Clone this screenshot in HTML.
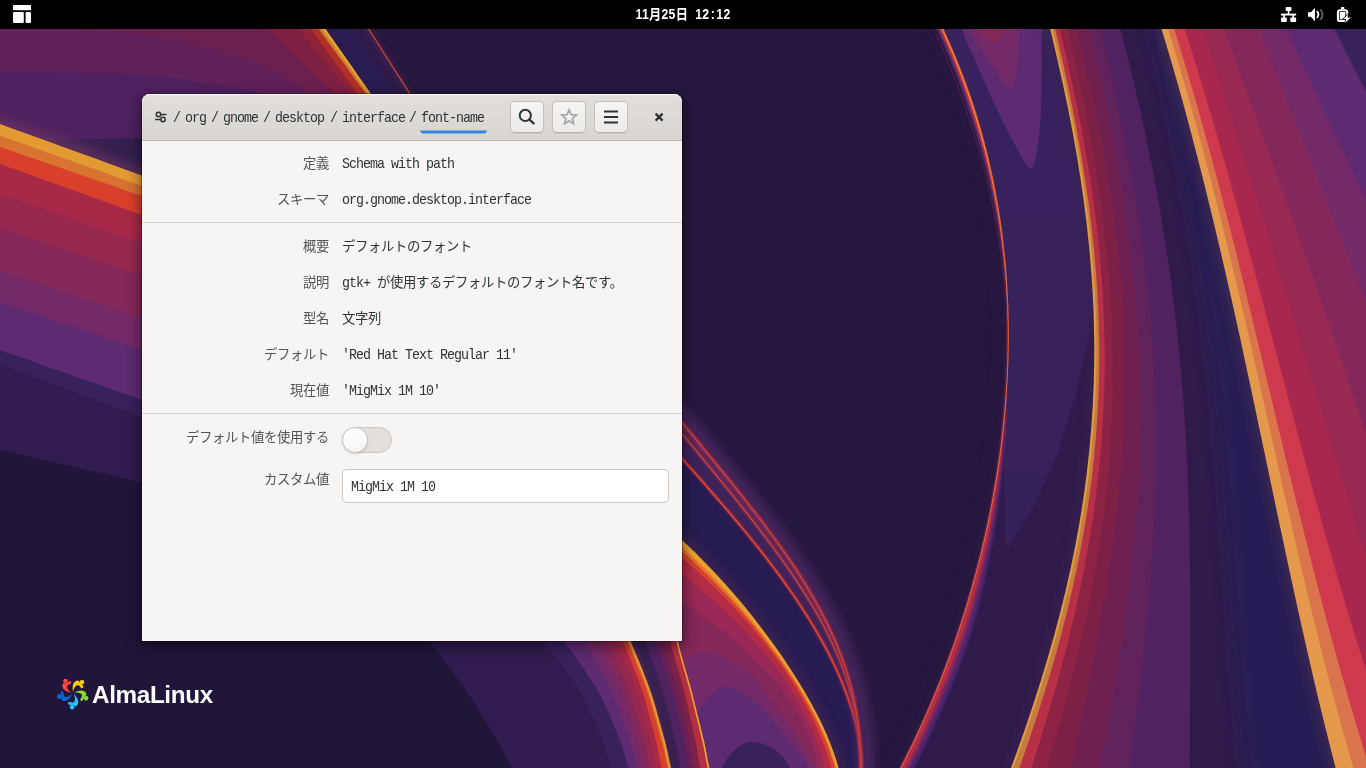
<!DOCTYPE html>
<html lang="ja">
<head>
<meta charset="utf-8">
<title>dconf-editor</title>
<style>
html,body{margin:0;padding:0;}
body{width:1366px;height:768px;overflow:hidden;position:relative;background:#26183f;font-family:"Liberation Mono","Noto Sans CJK JP",monospace;}
#wall{position:absolute;left:0;top:0;width:1366px;height:768px;}
#topbar{position:absolute;left:0;top:0;width:1366px;height:29px;background:#000;}
#clock{position:absolute;left:583px;top:0;width:200px;height:29px;line-height:29px;text-align:center;color:#fff;font-weight:bold;font-size:14px;white-space:nowrap;font-family:"Liberation Sans","Noto Sans CJK JP",sans-serif;transform:scaleX(0.87);word-spacing:3.9px;letter-spacing:0.35px;}
#clock i{font-style:normal;padding:0 1.5px;}
#win{position:absolute;left:142px;top:94px;width:540px;height:547px;background:#f6f5f4;border-radius:8px 8px 0 0;box-shadow:0 0 0 1px rgba(0,0,0,.25),0 4px 14px 2px rgba(0,0,0,.45);}
#hdr{position:absolute;left:0;top:0;width:540px;height:46px;border-radius:8px 8px 0 0;background:linear-gradient(#e1dedb,#dad6d2);border-bottom:1px solid #bfb8b1;box-shadow:inset 0 1px rgba(255,255,255,.8);}
.t{will-change:transform;position:absolute;white-space:nowrap;font-size:13.33px;line-height:20px;color:#2e3436;letter-spacing:-0.33px;}
.l{letter-spacing:-1px;transform:scaleY(1.08);transform-origin:0 72%;}
span.l{display:inline-block;}
.lab{color:#525557;text-align:right;width:200px;left:-12.7px;}
.val{left:200px;}
.sep{position:absolute;left:0;width:540px;height:1px;background:#d8d4d0;}
.btn{position:absolute;top:6.5px;width:32px;height:30px;border:1px solid #c6c0ba;border-bottom-color:#b8b1aa;border-radius:5px;background:linear-gradient(#f6f5f4,#edebe9);box-shadow:0 1px 1px rgba(0,0,0,.08);}
.pb{top:14.5px;margin-left:-0.6px;}
#sw{position:absolute;left:200px;top:333px;width:48px;height:24px;border:1px solid #cdc7c2;border-radius:14px;background:#e1dedb;}
#knob{position:absolute;left:-1px;top:-1px;width:24px;height:24px;border:1px solid #cdc7c2;border-radius:50%;background:linear-gradient(#fff,#f6f5f4);box-shadow:0 1px 2px rgba(0,0,0,.15);}
#entry{position:absolute;left:200px;top:375px;width:325px;height:31.5px;border:1px solid #cdc7c2;border-radius:5px;background:#fff;}
#almatxt{position:absolute;left:92px;top:681px;font-family:"Liberation Sans",sans-serif;font-weight:bold;font-size:24.3px;line-height:28px;color:#fff;letter-spacing:-0.38px;white-space:nowrap;transform:translateZ(0);}
</style>
</head>
<body>
<div id="wall"><svg width="1366" height="768" viewBox="0 0 1366 768" style="position:absolute;left:0;top:0"><defs>
<linearGradient id="gC" gradientUnits="userSpaceOnUse" x1="0" y1="0" x2="0" y2="768"><stop offset="0" stop-color="#3a235e"/><stop offset="0.45" stop-color="#38225c"/><stop offset="0.72" stop-color="#36215a"/><stop offset="1" stop-color="#36215a"/></linearGradient>
<linearGradient id="gWedge" gradientUnits="userSpaceOnUse" x1="30" y1="0" x2="150" y2="0"><stop offset="0" stop-color="#47245a"/><stop offset="1" stop-color="#2f1e4d"/></linearGradient>
<linearGradient id="gNavT" gradientUnits="userSpaceOnUse" x1="324.8" y1="28" x2="354.4" y2="7.3"><stop offset="0" stop-color="#2a1c52"/><stop offset="0.5" stop-color="#2a1c50"/><stop offset="0.68" stop-color="#2e1a48"/><stop offset="0.82" stop-color="#321c4a"/><stop offset="0.93" stop-color="#48235a"/><stop offset="1" stop-color="#5a2860"/></linearGradient>
<filter id="b1" x="-30%" y="-30%" width="160%" height="160%"><feGaussianBlur stdDeviation="0.9"/></filter>
<filter id="b2" x="-30%" y="-30%" width="160%" height="160%"><feGaussianBlur stdDeviation="2"/></filter>
<filter id="b4" x="-30%" y="-30%" width="160%" height="160%"><feGaussianBlur stdDeviation="4"/></filter>
<filter id="b8" x="-30%" y="-30%" width="160%" height="160%"><feGaussianBlur stdDeviation="8"/></filter>
</defs><rect width="1366" height="768" fill="#26183f"/>
<path d="M-40 -10 L470 -10 L470 420 L-40 420 Z" fill="#602059" />
<path d="M40.0 20.0C46.2 21.3 56.3 25.1 77.0 28.0C97.7 30.9 137.8 32.7 164.0 37.4C190.2 42.1 214.5 49.8 234.0 56.0C253.5 62.2 269.0 68.7 281.0 74.8C293.0 80.9 297.8 84.0 306.0 92.4C314.2 100.8 326.0 119.6 330.0 125.0L330.0 -10.0L40.0 -10.0Z" fill="#6c2050" />
<path d="M-40.0 70.0C-33.3 70.2 -30.1 70.5 0.0 71.3C30.1 72.1 105.4 72.7 140.5 74.8C175.6 76.9 191.3 81.1 210.8 84.0C230.3 86.9 242.7 88.1 257.6 92.4C272.5 96.7 285.4 100.4 300.0 110.0C314.6 119.6 337.5 143.3 345.0 150.0L345.0 420.0L-40.0 420.0Z" fill="#4f2160" />
<path d="M36.0 140.5C45.0 140.2 72.3 139.4 90.0 139.0C107.7 138.6 107.0 138.8 142.0 138.0C177.0 137.2 273.7 134.7 300.0 134.0L300.0 300.0L36.0 141.0Z" fill="url(#gWedge)" />
<path d="M238.4 0.0C243.2 4.7 256.8 18.0 267.0 28.0C277.2 38.0 288.4 49.0 299.6 60.0C310.8 71.0 322.7 82.7 334.3 94.0C345.9 105.3 363.2 122.3 369.0 128.0L394.9 128.0C391.0 122.3 379.1 105.3 371.2 94.0C363.3 82.7 355.1 71.0 347.5 60.0C339.8 49.0 332.1 38.0 325.1 28.0C318.1 18.0 308.8 4.7 305.5 0.0Z" fill="#7e2044" />
<path d="M273.6 0.0C277.5 4.7 288.5 18.0 296.8 28.0C305.1 38.0 314.2 49.0 323.3 60.0C332.4 71.0 342.0 82.7 351.4 94.0C360.8 105.3 374.8 122.3 379.5 128.0L394.9 128.0C391.0 122.3 379.1 105.3 371.2 94.0C363.3 82.7 355.1 71.0 347.5 60.0C339.8 49.0 332.1 38.0 325.1 28.0C318.1 18.0 308.8 4.7 305.5 0.0Z" fill="#902238" />
<path d="M289.6 0.0C293.0 4.7 302.7 18.0 310.0 28.0C317.3 38.0 325.3 49.0 333.3 60.0C341.3 71.0 349.8 82.7 358.0 94.0C366.2 105.3 378.6 122.3 382.7 128.0L394.9 128.0C391.0 122.3 379.1 105.3 371.2 94.0C363.3 82.7 355.1 71.0 347.5 60.0C339.8 49.0 332.1 38.0 325.1 28.0C318.1 18.0 308.8 4.7 305.5 0.0Z" fill="#b03028" />
<path d="M297.5 0.0C300.9 4.7 310.6 18.0 317.9 28.0C325.2 38.0 333.2 49.0 341.2 60.0C349.2 71.0 357.7 82.7 366.0 94.0C374.3 105.3 386.6 122.3 390.8 128.0L394.9 128.0C391.0 122.3 379.1 105.3 371.2 94.0C363.3 82.7 355.1 71.0 347.5 60.0C339.8 49.0 332.1 38.0 325.1 28.0C318.1 18.0 308.8 4.7 305.5 0.0Z" fill="#cc7c2c" />
<path d="M301.3 0.0C304.6 4.7 314.2 18.0 321.3 28.0C328.4 38.0 336.3 49.0 344.1 60.0C352.0 71.0 360.3 82.7 368.4 94.0C376.5 105.3 388.6 122.3 392.7 128.0L394.9 128.0C391.0 122.3 379.1 105.3 371.2 94.0C363.3 82.7 355.1 71.0 347.5 60.0C339.8 49.0 332.1 38.0 325.1 28.0C318.1 18.0 308.8 4.7 305.5 0.0Z" fill="#e2a030" />
<path d="M305.5 0.0C308.8 4.7 318.1 18.0 325.1 28.0C332.1 38.0 339.8 49.0 347.5 60.0C355.1 71.0 363.3 82.7 371.2 94.0C379.1 105.3 391.0 122.3 394.9 128.0L431.6 128.0C428.0 122.3 417.2 105.3 410.0 94.0C402.8 82.7 395.4 71.0 388.4 60.0C381.4 49.0 374.4 38.0 368.0 28.0C361.6 18.0 353.2 4.7 350.2 0.0Z" fill="url(#gNavT)" />
<path d="M350.2 0.0C353.2 4.7 361.6 18.0 368.0 28.0C374.4 38.0 381.4 49.0 388.4 60.0C395.4 71.0 402.8 82.7 410.0 94.0C417.2 105.3 428.0 122.3 431.6 128.0L470.0 128.0C470.0 122.3 470.0 105.3 470.0 94.0C470.0 82.7 470.0 71.0 470.0 60.0C470.0 49.0 470.0 38.0 470.0 28.0C470.0 18.0 470.0 4.7 470.0 0.0Z" fill="#26183f" />
<path d="M350.2 0.0C353.2 4.7 361.6 18.0 368.0 28.0C374.4 38.0 381.4 49.0 388.4 60.0C395.4 71.0 402.8 82.7 410.0 94.0C417.2 105.3 428.0 122.3 431.6 128.0" fill="none" stroke="#3a1c48" stroke-width="8" filter="url(#b2)" opacity="0.7"/>
<path d="M350.2 0.0C353.2 4.7 361.6 18.0 368.0 28.0C374.4 38.0 381.4 49.0 388.4 60.0C395.4 71.0 402.8 82.7 410.0 94.0C417.2 105.3 428.0 122.3 431.6 128.0" fill="none" stroke="#c8482c" stroke-width="1.3" />
<path d="M599.8 476.0C605.0 479.6 621.0 490.4 630.8 497.6C640.5 504.8 649.6 512.0 658.3 519.2C666.9 526.4 675.0 533.6 682.8 540.8C690.6 548.0 698.0 555.2 705.0 562.4C712.1 569.6 718.8 576.8 725.2 584.0C731.7 591.2 737.8 598.4 743.8 605.6C749.7 612.8 755.4 620.0 760.9 627.2C766.4 634.4 771.7 641.6 776.8 648.8C781.9 656.0 786.8 663.2 791.4 670.4C796.1 677.6 800.6 684.8 804.8 692.0C809.0 699.2 813.0 706.4 816.7 713.6C820.4 720.8 823.9 728.0 827.0 735.2C830.0 742.4 832.9 749.6 835.2 756.8C837.5 764.0 839.6 771.2 841.0 778.4C842.5 785.6 843.4 796.4 843.9 800.0L859.8 800.0C860.1 796.2 861.7 784.7 861.9 777.1C862.1 769.4 861.7 761.8 861.0 754.1C860.2 746.5 859.0 738.8 857.4 731.2C855.8 723.5 853.8 715.9 851.4 708.2C849.1 700.6 846.3 692.9 843.2 685.3C840.2 677.6 836.8 670.0 833.1 662.4C829.4 654.7 825.4 647.1 821.1 639.4C816.8 631.8 812.2 624.1 807.4 616.5C802.6 608.8 797.6 601.2 792.3 593.5C787.0 585.9 781.5 578.2 775.8 570.6C770.1 562.9 764.2 555.3 758.2 547.6C752.1 540.0 745.9 532.4 739.5 524.7C733.2 517.1 726.7 509.4 720.1 501.8C713.5 494.1 706.8 486.5 700.1 478.8C693.4 471.2 686.6 463.5 679.8 455.9C673.1 448.2 666.3 440.6 659.6 432.9C652.9 425.3 643.0 413.8 639.7 410.0Z" fill="#271c52" />
<path d="M599.8 476.0C605.0 479.6 621.0 490.4 630.8 497.6C640.5 504.8 649.6 512.0 658.3 519.2C666.9 526.4 675.0 533.6 682.8 540.8C690.6 548.0 698.0 555.2 705.0 562.4C712.1 569.6 718.8 576.8 725.2 584.0C731.7 591.2 737.8 598.4 743.8 605.6C749.7 612.8 755.4 620.0 760.9 627.2C766.4 634.4 771.7 641.6 776.8 648.8C781.9 656.0 786.8 663.2 791.4 670.4C796.1 677.6 800.6 684.8 804.8 692.0C809.0 699.2 813.0 706.4 816.7 713.6C820.4 720.8 823.9 728.0 827.0 735.2C830.0 742.4 832.9 749.6 835.2 756.8C837.5 764.0 839.6 771.2 841.0 778.4C842.5 785.6 843.4 796.4 843.9 800.0" fill="none" stroke="#3a2250" stroke-width="14" filter="url(#b4)" opacity="0.9"/>
<path d="M599.8 476.0C605.0 479.6 621.0 490.4 630.8 497.6C640.5 504.8 649.6 512.0 658.3 519.2C666.9 526.4 675.0 533.6 682.8 540.8C690.6 548.0 698.0 555.2 705.0 562.4C712.1 569.6 718.8 576.8 725.2 584.0C731.7 591.2 737.8 598.4 743.8 605.6C749.7 612.8 755.4 620.0 760.9 627.2C766.4 634.4 771.7 641.6 776.8 648.8C781.9 656.0 786.8 663.2 791.4 670.4C796.1 677.6 800.6 684.8 804.8 692.0C809.0 699.2 813.0 706.4 816.7 713.6C820.4 720.8 823.9 728.0 827.0 735.2C830.0 742.4 832.9 749.6 835.2 756.8C837.5 764.0 839.6 771.2 841.0 778.4C842.5 785.6 843.4 796.4 843.9 800.0L560.0 800.0L560.0 480.0Z" fill="#e8a030" />
<path d="M599.8 484.0C605.0 487.5 620.8 498.0 630.5 505.1C640.1 512.1 649.1 519.1 657.7 526.1C666.4 533.2 674.4 540.2 682.2 547.2C690.0 554.2 697.3 561.2 704.4 568.3C711.4 575.3 718.1 582.3 724.6 589.3C731.0 596.4 737.2 603.4 743.1 610.4C749.1 617.4 754.8 624.4 760.3 631.5C765.8 638.5 771.0 645.5 776.1 652.5C781.1 659.6 786.0 666.6 790.6 673.6C795.2 680.6 799.6 687.6 803.8 694.7C807.9 701.7 811.8 708.7 815.4 715.7C819.0 722.8 822.4 729.8 825.3 736.8C828.3 743.8 831.0 750.8 833.2 757.9C835.4 764.9 837.2 771.9 838.5 778.9C839.8 786.0 840.5 796.5 840.9 800.0L560.0 800.0L560.0 480.0Z" fill="#e0762f" />
<path d="M599.9 489.0C605.0 492.5 620.7 502.8 630.3 509.7C639.9 516.6 648.9 523.6 657.5 530.5C666.1 537.4 674.2 544.3 682.0 551.2C689.8 558.1 697.2 565.0 704.3 571.9C711.4 578.8 718.1 585.8 724.6 592.7C731.1 599.6 737.3 606.5 743.2 613.4C749.2 620.3 754.9 627.2 760.4 634.1C765.8 641.0 771.1 648.0 776.1 654.9C781.1 661.8 785.9 668.7 790.4 675.6C795.0 682.5 799.3 689.4 803.3 696.3C807.4 703.2 811.2 710.2 814.7 717.1C818.2 724.0 821.5 730.9 824.4 737.8C827.2 744.7 829.9 751.6 832.0 758.5C834.2 765.4 836.0 772.4 837.3 779.3C838.6 786.2 839.4 796.5 839.8 800.0L560.0 800.0L560.0 480.0Z" fill="#d8402f" />
<path d="M599.7 497.0C604.7 500.4 620.1 510.5 629.6 517.2C639.1 523.9 648.1 530.7 656.8 537.4C665.5 544.1 673.7 550.9 681.6 557.6C689.5 564.3 697.0 571.1 704.2 577.8C711.4 584.5 718.3 591.3 724.8 598.0C731.4 604.7 737.7 611.5 743.6 618.2C749.6 624.9 755.3 631.7 760.7 638.4C766.2 645.1 771.3 651.9 776.2 658.6C781.1 665.3 785.7 672.1 790.1 678.8C794.4 685.5 798.5 692.3 802.4 699.0C806.2 705.7 809.7 712.5 813.0 719.2C816.3 725.9 819.2 732.7 821.9 739.4C824.6 746.1 827.0 752.9 829.0 759.6C831.0 766.3 832.8 773.1 834.1 779.8C835.4 786.5 836.5 796.6 837.0 800.0L560.0 800.0L560.0 480.0Z" fill="#b22c46" />
<path d="M599.9 512.0C604.4 515.2 617.8 524.8 626.5 531.2C635.2 537.6 643.8 544.0 652.1 550.4C660.5 556.8 668.7 563.2 676.6 569.6C684.5 576.0 692.3 582.4 699.7 588.8C707.1 595.2 714.3 601.6 721.1 608.0C728.0 614.4 734.5 620.8 740.8 627.2C747.0 633.6 752.9 640.0 758.5 646.4C764.1 652.8 769.4 659.2 774.3 665.6C779.2 672.0 783.8 678.4 788.1 684.8C792.3 691.2 796.2 697.6 799.8 704.0C803.4 710.4 806.6 716.8 809.5 723.2C812.5 729.6 815.1 736.0 817.4 742.4C819.7 748.8 821.7 755.2 823.5 761.6C825.2 768.0 826.7 774.4 828.0 780.8C829.2 787.2 830.6 796.8 831.1 800.0L560.0 800.0L560.0 480.0Z" fill="#9a2856" />
<path d="M599.8 542.0C603.6 544.9 615.0 553.5 622.9 559.2C630.7 564.9 639.0 570.7 647.1 576.4C655.3 582.1 663.6 587.9 671.7 593.6C679.8 599.3 687.9 605.1 695.6 610.8C703.4 616.5 711.0 622.3 718.3 628.0C725.5 633.7 732.5 639.5 739.1 645.2C745.6 650.9 751.9 656.7 757.6 662.4C763.4 668.1 768.8 673.9 773.7 679.6C778.6 685.3 783.1 691.1 787.2 696.8C791.3 702.5 794.9 708.3 798.1 714.0C801.4 719.7 804.2 725.5 806.7 731.2C809.2 736.9 811.3 742.7 813.2 748.4C815.2 754.1 816.8 759.9 818.3 765.6C819.8 771.3 821.1 777.1 822.4 782.8C823.8 788.5 825.8 797.1 826.5 800.0L560.0 800.0L560.0 480.0Z" fill="#84285a" />
<path d="M660.0 690.0C664.0 685.3 676.2 668.2 684.0 662.0C691.8 655.8 696.2 650.7 707.0 652.5C717.8 654.3 736.2 662.6 748.7 673.0C761.2 683.4 773.5 703.5 782.0 715.0C790.5 726.5 794.5 733.2 800.0 742.0C805.5 750.8 810.7 758.3 815.0 768.0C819.3 777.7 824.2 794.7 826.0 800.0L560.0 800.0Z" fill="#742a68" />
<path d="M680.0 760.0C683.1 751.7 690.9 722.2 698.7 710.0C706.5 697.8 716.0 686.4 727.0 686.7C738.0 687.0 753.0 700.7 765.0 711.7C777.0 722.8 791.4 743.6 798.7 753.0C806.0 762.4 805.2 760.2 808.7 768.0C812.2 775.8 818.1 794.7 820.0 800.0L560.0 800.0Z" fill="#5e2a72" />
<path d="M715.0 800.0C716.2 794.7 718.7 776.3 722.0 768.0C725.3 759.7 730.0 754.4 735.0 750.0C740.0 745.6 745.3 741.7 752.0 741.7C758.7 741.7 768.7 745.6 775.0 750.0C781.3 754.4 785.8 759.7 790.0 768.0C794.2 776.3 798.3 794.7 800.0 800.0Z" fill="#38225c" />
<path d="M645.1 372.0C648.6 376.2 659.0 388.8 665.9 397.2C672.9 405.6 679.9 414.0 686.8 422.4C693.8 430.7 700.8 439.1 707.7 447.5C714.6 455.9 721.5 464.3 728.4 472.7C735.2 481.1 742.0 489.5 748.6 497.9C755.2 506.3 761.8 514.7 768.1 523.1C774.4 531.5 780.6 539.8 786.5 548.2C792.4 556.6 798.2 565.0 803.6 573.4C809.0 581.8 814.1 590.2 818.9 598.6C823.7 607.0 828.2 615.4 832.3 623.8C836.4 632.2 840.2 640.5 843.5 648.9C846.9 657.3 849.9 665.7 852.5 674.1C855.0 682.5 857.2 690.9 859.0 699.3C860.8 707.7 862.2 716.1 863.3 724.5C864.4 732.9 865.1 741.3 865.6 749.6C866.1 758.0 866.2 766.4 866.2 774.8C866.3 783.2 865.9 795.8 865.8 800.0" fill="none" stroke="#4a2560" stroke-width="18" filter="url(#b4)" opacity="0.8"/>
<path d="M640.1 372.0C643.6 376.2 654.0 388.8 660.9 397.2C667.9 405.6 674.9 414.0 681.8 422.4C688.8 430.7 695.8 439.1 702.7 447.5C709.6 455.9 716.5 464.3 723.4 472.7C730.2 481.1 737.0 489.5 743.6 497.9C750.2 506.3 756.8 514.7 763.1 523.1C769.4 531.5 775.6 539.8 781.5 548.2C787.4 556.6 793.2 565.0 798.6 573.4C804.0 581.8 809.1 590.2 813.9 598.6C818.7 607.0 823.2 615.4 827.3 623.8C831.4 632.2 835.2 640.5 838.5 648.9C841.9 657.3 844.9 665.7 847.5 674.1C850.0 682.5 852.2 690.9 854.0 699.3C855.8 707.7 857.2 716.1 858.3 724.5C859.4 732.9 860.1 741.3 860.6 749.6C861.1 758.0 861.2 766.4 861.2 774.8C861.3 783.2 860.9 795.8 860.8 800.0L859.8 800.0C860.1 796.2 861.7 784.7 861.9 777.1C862.1 769.4 861.7 761.8 861.0 754.1C860.2 746.5 859.0 738.8 857.4 731.2C855.8 723.5 853.8 715.9 851.4 708.2C849.1 700.6 846.3 692.9 843.2 685.3C840.2 677.6 836.8 670.0 833.1 662.4C829.4 654.7 825.4 647.1 821.1 639.4C816.8 631.8 812.2 624.1 807.4 616.5C802.6 608.8 797.6 601.2 792.3 593.5C787.0 585.9 781.5 578.2 775.8 570.6C770.1 562.9 764.2 555.3 758.2 547.6C752.1 540.0 745.9 532.4 739.5 524.7C733.2 517.1 726.7 509.4 720.1 501.8C713.5 494.1 706.8 486.5 700.1 478.8C693.4 471.2 686.6 463.5 679.8 455.9C673.1 448.2 666.3 440.6 659.6 432.9C652.9 425.3 643.0 413.8 639.7 410.0Z" fill="#3d2359" />
<path d="M640.1 372.0C643.6 376.2 654.0 388.8 660.9 397.2C667.9 405.6 674.9 414.0 681.8 422.4C688.8 430.7 695.8 439.1 702.7 447.5C709.6 455.9 716.5 464.3 723.4 472.7C730.2 481.1 737.0 489.5 743.6 497.9C750.2 506.3 756.8 514.7 763.1 523.1C769.4 531.5 775.6 539.8 781.5 548.2C787.4 556.6 793.2 565.0 798.6 573.4C804.0 581.8 809.1 590.2 813.9 598.6C818.7 607.0 823.2 615.4 827.3 623.8C831.4 632.2 835.2 640.5 838.5 648.9C841.9 657.3 844.9 665.7 847.5 674.1C850.0 682.5 852.2 690.9 854.0 699.3C855.8 707.7 857.2 716.1 858.3 724.5C859.4 732.9 860.1 741.3 860.6 749.6C861.1 758.0 861.2 766.4 861.2 774.8C861.3 783.2 860.9 795.8 860.8 800.0L860.6 800.0C860.6 795.9 860.8 783.7 860.7 775.5C860.6 767.4 860.4 759.2 859.8 751.1C859.3 742.9 858.5 734.7 857.3 726.6C856.1 718.4 854.6 710.3 852.7 702.1C850.8 694.0 848.5 685.8 845.8 677.6C843.1 669.5 840.1 661.3 836.6 653.2C833.1 645.0 829.2 636.9 825.0 628.7C820.8 620.5 816.2 612.4 811.4 604.2C806.5 596.1 801.3 587.9 795.8 579.8C790.4 571.6 784.7 563.5 778.8 555.3C772.9 547.1 766.7 539.0 760.5 530.8C754.3 522.7 747.8 514.5 741.3 506.4C734.9 498.2 728.3 490.0 721.6 481.9C715.0 473.7 708.3 465.6 701.6 457.4C694.8 449.3 688.1 441.1 681.3 432.9C674.5 424.8 667.7 416.6 660.9 408.5C654.0 400.3 643.6 388.1 640.2 384.0Z" fill="#56285c" />
<path d="M639.7 410.0C643.0 413.8 652.9 425.3 659.6 432.9C666.3 440.6 673.1 448.2 679.8 455.9C686.6 463.5 693.4 471.2 700.1 478.8C706.8 486.5 713.5 494.1 720.1 501.8C726.7 509.4 733.2 517.1 739.5 524.7C745.9 532.4 752.1 540.0 758.2 547.6C764.2 555.3 770.1 562.9 775.8 570.6C781.5 578.2 787.0 585.9 792.3 593.5C797.6 601.2 802.6 608.8 807.4 616.5C812.2 624.1 816.8 631.8 821.1 639.4C825.4 647.1 829.4 654.7 833.1 662.4C836.8 670.0 840.2 677.6 843.2 685.3C846.3 692.9 849.1 700.6 851.4 708.2C853.8 715.9 855.8 723.5 857.4 731.2C859.0 738.8 860.2 746.5 861.0 754.1C861.7 761.8 862.1 769.4 861.9 777.1C861.7 784.7 860.1 796.2 859.8 800.0" fill="none" stroke="#7a2850" stroke-width="4" filter="url(#b1)" opacity="0.8"/>
<path d="M639.7 410.0C643.0 413.8 652.9 425.3 659.6 432.9C666.3 440.6 673.1 448.2 679.8 455.9C686.6 463.5 693.4 471.2 700.1 478.8C706.8 486.5 713.5 494.1 720.1 501.8C726.7 509.4 733.2 517.1 739.5 524.7C745.9 532.4 752.1 540.0 758.2 547.6C764.2 555.3 770.1 562.9 775.8 570.6C781.5 578.2 787.0 585.9 792.3 593.5C797.6 601.2 802.6 608.8 807.4 616.5C812.2 624.1 816.8 631.8 821.1 639.4C825.4 647.1 829.4 654.7 833.1 662.4C836.8 670.0 840.2 677.6 843.2 685.3C846.3 692.9 849.1 700.6 851.4 708.2C853.8 715.9 855.8 723.5 857.4 731.2C859.0 738.8 860.2 746.5 861.0 754.1C861.7 761.8 862.1 769.4 861.9 777.1C861.7 784.7 860.1 796.2 859.8 800.0" fill="none" stroke="#d8402f" stroke-width="2.0" />
<path d="M640.2 384.0C643.6 388.1 654.0 400.3 660.9 408.5C667.7 416.6 674.5 424.8 681.3 432.9C688.1 441.1 694.8 449.3 701.6 457.4C708.3 465.6 715.0 473.7 721.6 481.9C728.3 490.0 734.9 498.2 741.3 506.4C747.8 514.5 754.3 522.7 760.5 530.8C766.7 539.0 772.9 547.1 778.8 555.3C784.7 563.5 790.4 571.6 795.8 579.8C801.3 587.9 806.5 596.1 811.4 604.2C816.2 612.4 820.8 620.5 825.0 628.7C829.2 636.9 833.1 645.0 836.6 653.2C840.1 661.3 843.1 669.5 845.8 677.6C848.5 685.8 850.8 694.0 852.7 702.1C854.6 710.3 856.1 718.4 857.3 726.6C858.5 734.7 859.3 742.9 859.8 751.1C860.4 759.2 860.6 767.4 860.7 775.5C860.8 783.7 860.6 795.9 860.6 800.0" fill="none" stroke="#8a2a50" stroke-width="3.5" filter="url(#b1)" opacity="0.8"/>
<path d="M640.2 384.0C643.6 388.1 654.0 400.3 660.9 408.5C667.7 416.6 674.5 424.8 681.3 432.9C688.1 441.1 694.8 449.3 701.6 457.4C708.3 465.6 715.0 473.7 721.6 481.9C728.3 490.0 734.9 498.2 741.3 506.4C747.8 514.5 754.3 522.7 760.5 530.8C766.7 539.0 772.9 547.1 778.8 555.3C784.7 563.5 790.4 571.6 795.8 579.8C801.3 587.9 806.5 596.1 811.4 604.2C816.2 612.4 820.8 620.5 825.0 628.7C829.2 636.9 833.1 645.0 836.6 653.2C840.1 661.3 843.1 669.5 845.8 677.6C848.5 685.8 850.8 694.0 852.7 702.1C854.6 710.3 856.1 718.4 857.3 726.6C858.5 734.7 859.3 742.9 859.8 751.1C860.4 759.2 860.6 767.4 860.7 775.5C860.8 783.7 860.6 795.9 860.6 800.0" fill="none" stroke="#c8443a" stroke-width="1.3" />
<path d="M640.1 372.0C643.6 376.2 654.0 388.8 660.9 397.2C667.9 405.6 674.9 414.0 681.8 422.4C688.8 430.7 695.8 439.1 702.7 447.5C709.6 455.9 716.5 464.3 723.4 472.7C730.2 481.1 737.0 489.5 743.6 497.9C750.2 506.3 756.8 514.7 763.1 523.1C769.4 531.5 775.6 539.8 781.5 548.2C787.4 556.6 793.2 565.0 798.6 573.4C804.0 581.8 809.1 590.2 813.9 598.6C818.7 607.0 823.2 615.4 827.3 623.8C831.4 632.2 835.2 640.5 838.5 648.9C841.9 657.3 844.9 665.7 847.5 674.1C850.0 682.5 852.2 690.9 854.0 699.3C855.8 707.7 857.2 716.1 858.3 724.5C859.4 732.9 860.1 741.3 860.6 749.6C861.1 758.0 861.2 766.4 861.2 774.8C861.3 783.2 860.9 795.8 860.8 800.0" fill="none" stroke="#9a2c4c" stroke-width="4" filter="url(#b1)" opacity="0.85"/>
<path d="M640.1 372.0C643.6 376.2 654.0 388.8 660.9 397.2C667.9 405.6 674.9 414.0 681.8 422.4C688.8 430.7 695.8 439.1 702.7 447.5C709.6 455.9 716.5 464.3 723.4 472.7C730.2 481.1 737.0 489.5 743.6 497.9C750.2 506.3 756.8 514.7 763.1 523.1C769.4 531.5 775.6 539.8 781.5 548.2C787.4 556.6 793.2 565.0 798.6 573.4C804.0 581.8 809.1 590.2 813.9 598.6C818.7 607.0 823.2 615.4 827.3 623.8C831.4 632.2 835.2 640.5 838.5 648.9C841.9 657.3 844.9 665.7 847.5 674.1C850.0 682.5 852.2 690.9 854.0 699.3C855.8 707.7 857.2 716.1 858.3 724.5C859.4 732.9 860.1 741.3 860.6 749.6C861.1 758.0 861.2 766.4 861.2 774.8C861.3 783.2 860.9 795.8 860.8 800.0" fill="none" stroke="#c4423a" stroke-width="1.5" />
<path d="M585.0 560.0C589.5 566.7 604.8 586.5 612.0 600.0C619.2 613.5 622.0 625.9 628.0 641.0C634.0 656.1 642.3 673.8 648.0 690.5C653.7 707.2 658.7 728.1 662.0 741.0C665.3 753.9 665.7 758.2 668.0 768.0C670.3 777.8 674.7 794.7 676.0 800.0L717.5 800.0C716.2 794.7 711.8 777.8 709.5 768.0C707.2 758.2 707.0 753.9 704.0 741.0C701.0 728.1 695.8 707.2 691.5 690.5C687.2 673.8 681.2 656.1 678.0 641.0C674.8 625.9 676.2 613.5 672.0 600.0C667.8 586.5 656.2 566.7 653.0 560.0Z" fill="#4a2450" />
<path d="M600.0 560.0C603.8 566.7 617.2 586.5 623.0 600.0C628.8 613.5 629.5 625.9 634.5 641.0C639.5 656.1 647.8 673.8 653.0 690.5C658.2 707.2 662.8 728.1 666.0 741.0C669.2 753.9 669.7 758.2 672.0 768.0C674.3 777.8 678.7 794.7 680.0 800.0L717.5 800.0C716.2 794.7 711.8 777.8 709.5 768.0C707.2 758.2 707.0 753.9 704.0 741.0C701.0 728.1 695.8 707.2 691.5 690.5C687.2 673.8 681.2 656.1 678.0 641.0C674.8 625.9 676.2 613.5 672.0 600.0C667.8 586.5 656.2 566.7 653.0 560.0Z" fill="#3a2050" />
<path d="M612.0 560.0C615.7 566.7 628.5 586.5 634.0 600.0C639.5 613.5 640.2 625.9 645.0 641.0C649.8 656.1 657.5 673.8 662.5 690.5C667.5 707.2 672.0 728.1 675.0 741.0C678.0 753.9 678.3 758.2 680.5 768.0C682.7 777.8 686.8 794.7 688.0 800.0L717.5 800.0C716.2 794.7 711.8 777.8 709.5 768.0C707.2 758.2 707.0 753.9 704.0 741.0C701.0 728.1 695.8 707.2 691.5 690.5C687.2 673.8 681.2 656.1 678.0 641.0C674.8 625.9 676.2 613.5 672.0 600.0C667.8 586.5 656.2 566.7 653.0 560.0Z" fill="#50225f" />
<path d="M624.0 560.0C627.7 566.7 640.7 586.5 646.0 600.0C651.3 613.5 651.7 625.9 656.0 641.0C660.3 656.1 667.3 673.8 672.0 690.5C676.7 707.2 681.2 728.1 684.0 741.0C686.8 753.9 687.0 758.2 689.0 768.0C691.0 777.8 694.8 794.7 696.0 800.0L717.5 800.0C716.2 794.7 711.8 777.8 709.5 768.0C707.2 758.2 707.0 753.9 704.0 741.0C701.0 728.1 695.8 707.2 691.5 690.5C687.2 673.8 681.2 656.1 678.0 641.0C674.8 625.9 676.2 613.5 672.0 600.0C667.8 586.5 656.2 566.7 653.0 560.0Z" fill="#6a2054" />
<path d="M633.0 560.0C636.5 566.7 649.0 586.5 654.0 600.0C659.0 613.5 659.0 625.9 663.0 641.0C667.0 656.1 673.6 673.8 678.0 690.5C682.4 707.2 686.8 728.1 689.5 741.0C692.2 753.9 692.1 758.2 694.0 768.0C695.9 777.8 699.8 794.7 701.0 800.0L717.5 800.0C716.2 794.7 711.8 777.8 709.5 768.0C707.2 758.2 707.0 753.9 704.0 741.0C701.0 728.1 695.8 707.2 691.5 690.5C687.2 673.8 681.2 656.1 678.0 641.0C674.8 625.9 676.2 613.5 672.0 600.0C667.8 586.5 656.2 566.7 653.0 560.0Z" fill="#7c2248" />
<path d="M642.0 560.0C645.3 566.7 657.3 586.5 662.0 600.0C666.7 613.5 666.3 625.9 670.0 641.0C673.7 656.1 679.8 673.8 684.0 690.5C688.2 707.2 692.8 728.1 695.5 741.0C698.2 753.9 698.4 758.2 700.5 768.0C702.6 777.8 706.8 794.7 708.0 800.0L717.5 800.0C716.2 794.7 711.8 777.8 709.5 768.0C707.2 758.2 707.0 753.9 704.0 741.0C701.0 728.1 695.8 707.2 691.5 690.5C687.2 673.8 681.2 656.1 678.0 641.0C674.8 625.9 676.2 613.5 672.0 600.0C667.8 586.5 656.2 566.7 653.0 560.0Z" fill="#b4303e" />
<path d="M651.0 560.0C654.2 566.7 665.8 586.5 670.0 600.0C674.2 613.5 673.0 625.9 676.3 641.0C679.6 656.1 685.5 673.8 689.8 690.5C694.1 707.2 699.2 728.1 702.2 741.0C705.2 753.9 705.5 758.2 707.7 768.0C710.0 777.8 714.4 794.7 715.7 800.0L717.5 800.0C716.2 794.7 711.8 777.8 709.5 768.0C707.2 758.2 707.0 753.9 704.0 741.0C701.0 728.1 695.8 707.2 691.5 690.5C687.2 673.8 681.2 656.1 678.0 641.0C674.8 625.9 676.2 613.5 672.0 600.0C667.8 586.5 656.2 566.7 653.0 560.0Z" fill="#e8a23a" />
<path d="M-40.0 109.5C-33.3 111.9 -18.5 117.3 0.0 124.0C18.5 130.7 47.3 141.2 71.0 149.8C94.7 158.4 120.5 167.7 142.0 175.6C163.5 183.5 190.3 193.5 200.0 197.1" fill="none" stroke="#7a3a5e" stroke-width="16" filter="url(#b4)" opacity="0.45"/>
<path d="M-40.0 109.5C-33.3 111.9 -18.5 117.3 0.0 124.0C18.5 130.7 47.3 141.2 71.0 149.8C94.7 158.4 120.5 167.7 142.0 175.6C163.5 183.5 159.3 176.2 200.0 197.1C240.7 218.0 330.8 259.9 386.2 301.3C441.7 342.7 494.1 393.2 532.8 445.5C571.5 497.8 602.3 582.4 618.5 615.0C634.8 647.6 625.2 628.4 630.5 641.0C635.8 653.6 644.6 673.8 650.3 690.5C656.0 707.2 661.4 728.1 664.9 741.0C668.3 753.9 668.8 758.2 671.0 768.0C673.2 777.8 677.1 794.7 678.4 800.0L678.4 828.0L-60.0 828.0L-60.0 109.5Z" fill="#e29a33" />
<path d="M-40.0 121.4C-33.3 123.8 -18.5 129.0 0.0 135.6C18.5 142.2 47.3 152.4 71.0 160.8C94.7 169.2 120.5 178.3 142.0 186.0C163.5 193.7 159.5 186.5 200.0 207.0C240.5 227.5 330.0 268.4 385.1 308.9C440.3 349.3 492.5 398.9 531.0 449.9C569.6 500.9 600.1 583.1 616.3 615.0C632.5 646.9 623.0 628.4 628.3 641.0C633.6 653.6 642.4 673.8 648.2 690.5C653.9 707.2 659.4 728.1 662.8 741.0C666.3 753.9 666.7 758.2 669.0 768.0C671.3 777.8 675.2 794.7 676.4 800.0L676.4 828.0L-60.0 828.0L-60.0 121.4Z" fill="#d87331" />
<path d="M-40.0 133.2C-33.3 135.5 -18.5 140.6 0.0 147.0C18.5 153.4 47.3 163.3 71.0 171.5C94.7 179.7 120.5 188.5 142.0 196.0C163.5 203.5 159.6 196.4 200.0 216.4C240.4 236.4 329.5 276.5 384.5 316.1C439.5 355.8 491.6 404.3 530.0 454.1C568.4 503.9 598.9 583.9 615.0 615.0C631.2 646.1 621.7 628.4 627.0 641.0C632.3 653.6 641.1 673.8 646.8 690.5C652.5 707.2 657.9 728.1 661.4 741.0C664.8 753.9 665.3 758.2 667.5 768.0C669.7 777.8 673.6 794.7 674.9 800.0L674.9 828.0L-60.0 828.0L-60.0 133.2Z" fill="#d8402c" />
<path d="M-40.0 149.6C-33.3 152.0 -18.5 157.4 0.0 164.0C18.5 170.6 47.3 181.0 71.0 189.5C94.7 198.0 120.5 207.2 142.0 215.0C163.5 222.8 160.0 217.1 200.0 236.2C240.0 255.4 327.8 292.4 382.2 330.0C436.7 367.7 488.3 414.6 526.4 462.1C564.5 509.6 594.6 585.2 610.6 615.0C626.6 644.8 617.2 628.4 622.5 641.0C627.8 653.6 636.6 673.8 642.2 690.5C647.8 707.2 652.8 728.1 656.0 741.0C659.2 753.9 659.5 758.2 661.5 768.0C663.5 777.8 667.0 794.7 668.1 800.0L668.1 828.0L-60.0 828.0L-60.0 149.6Z" fill="#a82848" />
<path d="M-40.0 179.9C-33.3 182.2 -18.5 187.3 0.0 193.8C18.5 200.2 47.3 210.2 71.0 218.4C94.7 226.6 120.5 235.5 142.0 243.0C163.5 250.5 160.5 245.6 200.0 263.5C239.5 281.4 325.5 315.4 379.0 350.5C432.5 385.5 483.8 429.8 521.2 473.8C558.6 517.9 587.8 587.1 603.6 615.0C619.4 642.9 610.5 628.4 616.0 641.0C621.5 653.6 630.8 673.8 636.6 690.5C642.4 707.2 647.4 728.1 650.6 741.0C653.8 753.9 654.0 758.2 656.0 768.0C658.0 777.8 661.4 794.7 662.5 800.0L662.5 828.0L-60.0 828.0L-60.0 179.9Z" fill="#96284f" />
<path d="M-40.0 214.5C-33.3 216.7 -18.5 221.7 0.0 228.0C18.5 234.3 47.3 244.0 71.0 252.0C94.7 260.0 120.5 268.7 142.0 276.0C163.5 283.3 161.2 279.6 200.0 296.0C238.8 312.4 322.3 342.6 374.8 374.6C427.2 406.5 477.8 447.6 514.4 487.7C551.0 527.8 579.0 589.5 594.5 615.0C610.0 640.5 601.7 628.4 607.5 641.0C613.3 653.6 623.0 673.8 629.1 690.5C635.2 707.2 640.6 728.1 644.1 741.0C647.6 753.9 647.8 758.2 650.0 768.0C652.2 777.8 655.9 794.7 657.1 800.0L657.1 828.0L-60.0 828.0L-60.0 214.5Z" fill="#84285a" />
<path d="M-40.0 257.8C-33.3 260.0 -18.5 264.9 0.0 271.0C18.5 277.1 47.3 286.7 71.0 294.5C94.7 302.3 120.5 310.8 142.0 318.0C163.5 325.2 162.0 323.0 200.0 337.6C238.0 352.1 318.8 377.3 369.9 405.2C420.9 433.2 470.9 470.4 506.6 505.3C542.2 540.3 568.3 592.4 583.5 615.0C598.7 637.6 591.4 628.4 597.7 641.0C604.0 653.6 614.5 673.8 621.2 690.5C627.8 707.2 633.6 728.1 637.4 741.0C641.2 753.9 641.5 758.2 643.8 768.0C646.1 777.8 650.2 794.7 651.5 800.0L651.5 828.0L-60.0 828.0L-60.0 257.8Z" fill="#742a68" />
<path d="M-40.0 288.5C-33.3 290.7 -18.5 295.7 0.0 302.0C18.5 308.3 47.3 318.0 71.0 326.0C94.7 334.0 120.5 342.7 142.0 350.0C163.5 357.3 163.1 356.9 200.0 370.0C236.9 383.1 313.9 403.8 363.2 428.6C412.6 453.4 461.8 487.7 496.0 518.8C530.2 549.9 553.4 594.6 568.2 615.0C582.9 635.4 577.3 628.4 584.5 641.0C591.7 653.6 604.0 673.8 611.5 690.5C619.1 707.2 625.7 728.1 630.0 741.0C634.3 753.9 634.6 758.2 637.2 768.0C639.8 777.8 644.4 794.7 645.8 800.0L645.8 828.0L-60.0 828.0L-60.0 288.5Z" fill="#5e2a72" />
<path d="M-40.0 335.9C-33.3 338.3 -18.5 343.5 0.0 350.0C18.5 356.5 47.3 366.7 71.0 375.0C94.7 383.3 120.5 392.4 142.0 400.0C163.5 407.6 164.9 410.0 200.0 420.8C235.1 431.7 306.3 445.2 352.8 465.1C399.3 484.9 447.6 514.8 479.3 539.8C511.0 564.8 529.0 598.1 543.0 615.0C557.1 631.9 554.5 628.4 563.6 641.0C572.7 653.6 588.2 673.8 597.7 690.5C607.1 707.2 615.0 728.1 620.1 741.0C625.2 753.9 625.3 758.2 628.4 768.0C631.5 777.8 636.7 794.7 638.4 800.0L638.4 828.0L-60.0 828.0L-60.0 335.9Z" fill="#38225c" />
<path d="M-40.0 348.9C-33.3 351.4 -18.5 357.0 0.0 364.0C18.5 371.0 47.3 381.8 71.0 390.8C94.7 399.7 120.5 409.3 142.0 417.5C163.5 425.7 166.6 429.7 200.0 439.8C233.4 449.8 298.6 460.0 342.4 477.8C386.2 495.7 432.9 524.3 462.6 547.1C492.4 570.0 507.4 599.4 520.8 615.0C534.1 630.6 533.0 628.4 542.8 641.0C552.6 653.6 569.3 673.8 579.3 690.5C589.3 707.2 597.3 728.1 602.5 741.0C607.8 753.9 607.8 758.2 610.8 768.0C613.8 777.8 619.1 794.7 620.7 800.0L620.7 828.0L-60.0 828.0L-60.0 348.9Z" fill="#301c4e" />
<path d="M-40.0 440.8C-33.3 442.4 -18.5 445.8 0.0 450.0C18.5 454.2 47.3 460.8 71.0 466.2C94.7 471.7 120.5 477.5 142.0 482.5C163.5 487.5 176.1 488.9 200.0 496.0C223.9 503.2 256.7 512.2 285.2 525.3C313.8 538.4 351.1 559.5 371.2 574.4C391.3 589.4 396.3 603.9 405.8 615.0C415.4 626.1 418.5 628.4 428.5 641.0C438.5 653.6 454.6 673.8 466.0 690.5C477.5 707.2 489.7 728.1 497.3 741.0C505.0 753.9 506.6 758.2 512.0 768.0C517.4 777.8 526.7 794.7 529.6 800.0L529.6 828.0L-60.0 828.0L-60.0 440.8Z" fill="#21153a" />
<path d="M911.6 -30.0C915.8 -22.3 929.0 0.7 936.6 16.0C944.2 31.3 951.0 46.7 957.3 62.0C963.5 77.3 969.0 92.7 973.9 108.0C978.9 123.3 983.2 138.7 987.0 154.0C990.8 169.3 994.0 184.7 996.7 200.0C999.4 215.3 1001.6 230.7 1003.3 246.0C1005.1 261.3 1006.3 276.7 1007.1 292.0C1007.9 307.3 1008.3 322.7 1008.2 338.0C1008.2 353.3 1007.7 368.7 1006.8 384.0C1006.0 399.3 1004.7 414.7 1003.0 430.0C1001.4 445.3 999.3 460.7 996.8 476.0C994.4 491.3 991.6 506.7 988.3 522.0C985.1 537.3 981.5 552.7 977.5 568.0C973.5 583.3 969.1 598.7 964.2 614.0C959.4 629.3 954.2 644.7 948.5 660.0C942.8 675.3 936.7 690.7 930.1 706.0C923.5 721.3 916.4 736.7 908.9 752.0C901.3 767.3 888.7 790.3 884.6 798.0" fill="none" stroke="#2c1941" stroke-width="22" filter="url(#b8)" opacity="0.5"/>
<path d="M911.6 -30.0C915.8 -22.3 929.0 0.7 936.6 16.0C944.2 31.3 951.0 46.7 957.3 62.0C963.5 77.3 969.0 92.7 973.9 108.0C978.9 123.3 983.2 138.7 987.0 154.0C990.8 169.3 994.0 184.7 996.7 200.0C999.4 215.3 1001.6 230.7 1003.3 246.0C1005.1 261.3 1006.3 276.7 1007.1 292.0C1007.9 307.3 1008.3 322.7 1008.2 338.0C1008.2 353.3 1007.7 368.7 1006.8 384.0C1006.0 399.3 1004.7 414.7 1003.0 430.0C1001.4 445.3 999.3 460.7 996.8 476.0C994.4 491.3 991.6 506.7 988.3 522.0C985.1 537.3 981.5 552.7 977.5 568.0C973.5 583.3 969.1 598.7 964.2 614.0C959.4 629.3 954.2 644.7 948.5 660.0C942.8 675.3 936.7 690.7 930.1 706.0C923.5 721.3 916.4 736.7 908.9 752.0C901.3 767.3 888.7 790.3 884.6 798.0L999.6 798.0C1002.5 790.3 1011.3 767.3 1016.8 752.0C1022.3 736.7 1027.7 721.3 1032.7 706.0C1037.8 690.7 1042.6 675.3 1047.1 660.0C1051.6 644.7 1055.9 629.3 1059.8 614.0C1063.8 598.7 1067.4 583.3 1070.7 568.0C1074.0 552.7 1077.0 537.3 1079.6 522.0C1082.2 506.7 1084.5 491.3 1086.4 476.0C1088.3 460.7 1089.9 445.3 1091.1 430.0C1092.3 414.7 1093.2 399.3 1093.7 384.0C1094.2 368.7 1094.4 353.3 1094.2 338.0C1094.0 322.7 1093.5 307.3 1092.6 292.0C1091.7 276.7 1090.5 261.3 1089.0 246.0C1087.5 230.7 1085.7 215.3 1083.6 200.0C1081.5 184.7 1079.1 169.3 1076.5 154.0C1073.9 138.7 1071.0 123.3 1067.9 108.0C1064.8 92.7 1061.4 77.3 1057.9 62.0C1054.5 46.7 1050.8 31.3 1047.0 16.0C1043.2 0.7 1037.2 -22.3 1035.3 -30.0Z" fill="#2f1b4b" />
<path d="M911.6 -30.0C913.0 -27.5 917.1 -20.0 919.8 -15.0C922.5 -10.0 925.2 -5.0 927.9 0.0C930.6 5.0 933.6 10.0 936.1 15.0C938.6 20.0 940.6 25.0 942.9 30.0C945.2 35.0 947.4 40.0 949.6 45.0C951.9 50.0 954.3 55.0 956.4 60.0C958.4 65.0 960.1 70.0 962.0 75.0C963.8 80.0 965.6 85.0 967.4 90.0C969.2 95.0 971.2 100.0 972.8 105.0C974.5 110.0 975.9 115.0 977.3 120.0C978.8 125.0 980.2 130.0 981.6 135.0C983.0 140.0 984.6 145.0 985.8 150.0C987.1 155.0 988.2 160.0 989.3 165.0C990.4 170.0 991.4 175.0 992.5 180.0C993.5 185.0 994.7 190.0 995.6 195.0C996.6 200.0 997.3 205.0 998.1 210.0C998.9 215.0 999.6 220.0 1000.3 225.0C1001.0 230.0 1001.8 235.0 1002.5 240.0C1003.1 245.0 1003.6 250.0 1004.1 255.0C1004.5 260.0 1004.9 265.0 1005.3 270.0C1005.7 275.0 1006.2 280.0 1006.5 285.0C1006.9 290.0 1007.1 295.0 1007.3 300.0C1007.5 305.0 1007.5 310.0 1007.7 315.0C1007.8 320.0 1008.0 325.0 1008.0 330.0C1008.1 335.0 1008.1 340.0 1008.0 345.0C1007.9 350.0 1007.7 355.0 1007.6 360.0C1007.4 365.0 1007.3 370.0 1007.1 375.0C1006.9 380.0 1006.7 385.0 1006.3 390.0C1006.0 395.0 1005.5 400.0 1005.1 405.0C1004.7 410.0 1004.1 415.0 1003.9 420.0C1003.7 425.0 1003.9 430.0 1003.9 435.0C1003.9 440.0 1003.9 445.0 1003.9 450.0C1003.9 455.0 1004.0 460.0 1004.0 465.0C1004.0 470.0 1004.0 475.0 1004.0 480.0C1004.0 485.0 1004.1 490.0 1004.2 495.0C1004.2 500.0 1004.3 505.0 1004.4 510.0C1004.5 515.0 1004.6 520.0 1004.8 525.0C1005.1 530.0 1005.6 536.7 1005.9 540.0C1006.1 543.3 1006.1 543.5 1006.2 545.0C1006.3 546.5 1006.5 548.3 1006.5 549.0L1006.5 549.0C1007.0 548.3 1008.4 546.5 1009.5 545.0C1010.6 543.5 1011.1 543.3 1013.2 540.0C1015.4 536.7 1019.2 530.0 1022.2 525.0C1025.1 520.0 1028.2 515.0 1030.9 510.0C1033.7 505.0 1036.2 500.0 1038.6 495.0C1041.0 490.0 1043.2 485.0 1045.4 480.0C1047.7 475.0 1049.9 470.0 1052.2 465.0C1054.5 460.0 1057.1 455.0 1059.0 450.0C1060.9 445.0 1062.0 440.0 1063.5 435.0C1065.0 430.0 1066.5 425.0 1068.0 420.0C1069.5 415.0 1071.0 410.0 1072.5 405.0C1074.0 400.0 1075.7 395.0 1077.0 390.0C1078.3 385.0 1079.2 380.0 1080.3 375.0C1081.4 370.0 1082.5 365.0 1083.6 360.0C1084.7 355.0 1085.9 350.0 1086.9 345.0C1087.9 340.0 1088.6 335.0 1089.4 330.0C1090.1 325.0 1090.7 320.0 1091.4 315.0C1092.2 310.0 1093.6 305.0 1093.9 300.0C1094.1 295.0 1093.4 290.0 1093.1 285.0C1092.7 280.0 1092.3 275.0 1091.9 270.0C1091.5 265.0 1091.2 260.0 1090.7 255.0C1090.3 250.0 1089.9 245.0 1089.3 240.0C1088.8 235.0 1088.2 230.0 1087.6 225.0C1087.0 220.0 1086.4 215.0 1085.8 210.0C1085.2 205.0 1084.6 200.0 1083.9 195.0C1083.1 190.0 1082.3 185.0 1081.5 180.0C1080.8 175.0 1080.0 170.0 1079.2 165.0C1078.4 160.0 1077.6 155.0 1076.8 150.0C1075.9 145.0 1074.9 140.0 1073.9 135.0C1073.0 130.0 1072.1 125.0 1071.1 120.0C1070.2 115.0 1069.2 110.0 1068.2 105.0C1067.2 100.0 1066.1 95.0 1065.0 90.0C1063.9 85.0 1062.8 80.0 1061.7 75.0C1060.7 70.0 1059.6 65.0 1058.5 60.0C1057.3 55.0 1056.1 50.0 1054.9 45.0C1053.7 40.0 1052.5 35.0 1051.3 30.0C1050.1 25.0 1049.0 20.0 1047.7 15.0C1046.5 10.0 1045.2 5.0 1043.9 0.0C1042.6 -5.0 1041.4 -10.0 1040.1 -15.0C1038.8 -20.0 1036.9 -27.5 1036.3 -30.0Z" fill="url(#gC)" filter="url(#b1)"/>
<path d="M953.0 -30.0C954.5 -20.3 958.3 13.0 962.0 28.0C965.7 43.0 969.5 47.2 975.0 60.0C980.5 72.8 988.3 90.8 995.0 105.0C1001.7 119.2 1009.2 134.5 1015.0 145.0C1020.8 155.5 1026.3 167.2 1030.0 168.0C1033.7 168.8 1035.2 159.7 1037.0 150.0C1038.8 140.3 1040.2 130.3 1041.0 110.0C1041.8 89.7 1041.8 51.3 1042.0 28.0C1042.2 4.7 1042.0 -20.3 1042.0 -30.0Z" fill="#5e2a72" />
<path d="M966.0 -30.0C966.7 -20.3 966.8 13.8 970.0 28.0C973.2 42.2 979.5 46.3 985.0 55.0C990.5 63.7 998.5 74.3 1003.0 80.0C1007.5 85.7 1009.7 90.7 1012.0 89.0C1014.3 87.3 1015.7 80.2 1017.0 70.0C1018.3 59.8 1019.3 44.7 1020.0 28.0C1020.7 11.3 1020.8 -20.3 1021.0 -30.0Z" fill="#742a68" />
<path d="M978.0 -30.0C978.3 -20.3 978.5 16.7 980.0 28.0C981.5 39.3 985.0 35.5 987.0 38.0C989.0 40.5 990.0 43.0 992.0 43.0C994.0 43.0 996.8 40.5 999.0 38.0C1001.2 35.5 1003.7 39.3 1005.0 28.0C1006.3 16.7 1006.7 -20.3 1007.0 -30.0Z" fill="#84285a" />
<path d="M911.6 -30.0C913.0 -27.7 917.1 -20.6 919.7 -16.0C922.4 -11.3 924.9 -6.6 927.4 -1.9C929.9 2.7 932.3 7.4 934.7 12.1C937.0 16.8 939.3 21.5 941.5 26.1C943.7 30.8 945.9 35.5 948.0 40.2C950.1 44.8 952.1 49.5 954.1 54.2C956.0 58.9 957.9 63.6 959.7 68.2C961.6 72.9 963.4 77.6 965.1 82.3C966.8 86.9 968.5 91.6 970.1 96.3C971.7 101.0 973.2 105.7 974.7 110.3C976.2 115.0 977.6 119.7 979.0 124.4C980.3 129.1 981.7 133.7 982.9 138.4C984.2 143.1 985.4 147.8 986.6 152.4C987.7 157.1 988.9 161.8 989.9 166.5C991.0 171.2 992.0 175.8 993.0 180.5C993.9 185.2 994.8 189.9 995.7 194.5C996.6 199.2 997.4 203.9 998.1 208.6C998.9 213.3 999.6 217.9 1000.3 222.6C1001.0 227.3 1001.6 232.0 1002.2 236.6C1002.8 241.3 1003.3 246.0 1003.8 250.7C1004.3 255.4 1004.8 260.0 1005.2 264.7C1005.6 269.4 1006.0 274.1 1006.3 278.7C1006.6 283.4 1006.9 288.1 1007.1 292.8C1007.4 297.5 1007.6 302.1 1007.8 306.8C1007.9 311.5 1008.0 316.2 1008.1 320.8C1008.2 325.5 1008.2 330.2 1008.2 334.9C1008.2 339.6 1008.2 344.2 1008.1 348.9C1008.1 353.6 1007.9 358.3 1007.8 362.9C1007.6 367.6 1007.4 372.3 1007.2 377.0C1007.0 381.7 1006.7 386.3 1006.4 391.0C1006.1 395.7 1005.8 400.4 1005.4 405.1C1005.0 409.7 1004.6 414.4 1004.1 419.1C1003.7 423.8 1003.2 428.4 1002.7 433.1C1002.2 437.8 1001.6 442.5 1001.0 447.2C1000.4 451.8 999.8 456.5 999.1 461.2C998.4 465.9 997.7 470.5 997.0 475.2C996.2 479.9 995.5 484.6 994.6 489.3C993.8 493.9 993.0 498.6 992.1 503.3C991.2 508.0 990.3 512.6 989.3 517.3C988.4 522.0 987.4 526.7 986.3 531.4C985.3 536.0 984.2 540.7 983.1 545.4C982.0 550.1 980.9 554.7 979.7 559.4C978.5 564.1 977.3 568.8 976.0 573.5C974.8 578.1 973.5 582.8 972.2 587.5C970.8 592.2 969.5 596.8 968.1 601.5C966.7 606.2 965.2 610.9 963.7 615.6C962.3 620.2 960.7 624.9 959.2 629.6C957.6 634.3 956.0 638.9 954.4 643.6C952.7 648.3 951.0 653.0 949.3 657.7C947.6 662.3 945.8 667.0 944.0 671.7C942.2 676.4 940.4 681.1 938.5 685.7C936.6 690.4 934.7 695.1 932.7 699.8C930.7 704.4 928.7 709.1 926.7 713.8C924.6 718.5 922.5 723.2 920.4 727.8C918.2 732.5 916.0 737.2 913.8 741.9C911.5 746.5 909.3 751.2 906.9 755.9C904.6 760.6 902.2 765.3 899.8 769.9C897.3 774.6 894.9 779.3 892.3 784.0C889.8 788.6 885.9 795.7 884.6 798.0L897.6 798.0C898.9 795.7 902.8 788.6 905.3 784.0C907.9 779.3 910.3 774.6 912.8 769.9C915.2 765.3 917.6 760.6 919.9 755.9C922.3 751.2 924.5 746.5 926.8 741.9C929.0 737.2 931.2 732.5 933.4 727.8C935.5 723.2 937.6 718.5 939.7 713.8C941.7 709.1 943.7 704.4 945.7 699.8C947.7 695.1 949.6 690.4 951.5 685.7C953.4 681.1 955.2 676.4 957.0 671.7C958.8 667.0 960.6 662.3 962.3 657.7C964.0 653.0 965.7 648.3 967.4 643.6C969.0 638.9 970.7 634.3 972.1 629.6C973.6 624.9 974.7 620.2 976.0 615.6C977.2 610.9 978.4 606.2 979.6 601.5C980.7 596.8 981.9 592.2 983.0 587.5C984.0 582.8 985.1 578.1 986.1 573.5C987.1 568.8 988.1 564.1 989.0 559.4C990.0 554.7 990.9 550.1 991.7 545.4C992.6 540.7 993.4 536.0 994.2 531.4C995.0 526.7 995.7 522.0 996.5 517.3C997.2 512.6 997.9 508.0 998.5 503.3C999.1 498.6 999.7 493.9 1000.3 489.3C1000.9 484.6 1001.4 479.9 1001.9 475.2C1002.4 470.5 1002.9 465.9 1003.3 461.2C1003.7 456.5 1004.1 451.8 1004.5 447.2C1004.8 442.5 1005.2 437.8 1005.4 433.1C1005.7 428.4 1006.0 423.8 1006.2 419.1C1006.4 414.4 1006.6 409.7 1006.7 405.1C1006.8 400.4 1006.9 395.7 1007.0 391.0C1007.1 386.3 1007.1 381.7 1007.2 377.0C1007.3 372.3 1007.6 367.6 1007.8 362.9C1007.9 358.3 1008.1 353.6 1008.1 348.9C1008.2 344.2 1008.2 339.6 1008.2 334.9C1008.2 330.2 1008.2 325.5 1008.1 320.8C1008.0 316.2 1007.9 311.5 1007.8 306.8C1007.6 302.1 1007.4 297.5 1007.1 292.8C1006.9 288.1 1006.6 283.4 1006.3 278.7C1006.0 274.1 1005.6 269.4 1005.2 264.7C1004.8 260.0 1004.3 255.4 1003.8 250.7C1003.3 246.0 1002.8 241.3 1002.2 236.6C1001.6 232.0 1001.0 227.3 1000.3 222.6C999.6 217.9 998.9 213.3 998.1 208.6C997.4 203.9 996.6 199.2 995.7 194.5C994.8 189.9 993.9 185.2 993.0 180.5C992.0 175.8 991.0 171.2 989.9 166.5C988.9 161.8 987.7 157.1 986.6 152.4C985.4 147.8 984.2 143.1 982.9 138.4C981.7 133.7 980.3 129.1 979.0 124.4C977.6 119.7 976.2 115.0 974.7 110.3C973.2 105.7 971.7 101.0 970.1 96.3C968.5 91.6 966.8 86.9 965.1 82.3C963.4 77.6 961.6 72.9 959.7 68.2C957.9 63.6 956.0 58.9 954.1 54.2C952.1 49.5 950.1 44.8 948.0 40.2C945.9 35.5 943.7 30.8 941.5 26.1C939.3 21.5 937.0 16.8 934.7 12.1C932.3 7.4 929.9 2.7 927.4 -1.9C924.9 -6.6 922.4 -11.3 919.7 -16.0C917.1 -20.6 913.0 -27.7 911.6 -30.0Z" fill="#4c2870" filter="url(#b1)"/>
<path d="M911.6 -30.0C913.0 -27.7 917.1 -20.6 919.7 -16.0C922.4 -11.3 924.9 -6.6 927.4 -1.9C929.9 2.7 932.3 7.4 934.7 12.1C937.0 16.8 939.3 21.5 941.5 26.1C943.7 30.8 945.9 35.5 948.0 40.2C950.1 44.8 952.1 49.5 954.1 54.2C956.0 58.9 957.9 63.6 959.7 68.2C961.6 72.9 963.4 77.6 965.1 82.3C966.8 86.9 968.5 91.6 970.1 96.3C971.7 101.0 973.2 105.7 974.7 110.3C976.2 115.0 977.6 119.7 979.0 124.4C980.3 129.1 981.7 133.7 982.9 138.4C984.2 143.1 985.4 147.8 986.6 152.4C987.7 157.1 988.9 161.8 989.9 166.5C991.0 171.2 992.0 175.8 993.0 180.5C993.9 185.2 994.8 189.9 995.7 194.5C996.6 199.2 997.4 203.9 998.1 208.6C998.9 213.3 999.6 217.9 1000.3 222.6C1001.0 227.3 1001.6 232.0 1002.2 236.6C1002.8 241.3 1003.3 246.0 1003.8 250.7C1004.3 255.4 1004.8 260.0 1005.2 264.7C1005.6 269.4 1006.0 274.1 1006.3 278.7C1006.6 283.4 1006.9 288.1 1007.1 292.8C1007.4 297.5 1007.6 302.1 1007.8 306.8C1007.9 311.5 1008.0 316.2 1008.1 320.8C1008.2 325.5 1008.2 330.2 1008.2 334.9C1008.2 339.6 1008.2 344.2 1008.1 348.9C1008.1 353.6 1007.9 358.3 1007.8 362.9C1007.6 367.6 1007.4 372.3 1007.2 377.0C1007.0 381.7 1006.7 386.3 1006.4 391.0C1006.1 395.7 1005.8 400.4 1005.4 405.1C1005.0 409.7 1004.6 414.4 1004.1 419.1C1003.7 423.8 1003.2 428.4 1002.7 433.1C1002.2 437.8 1001.6 442.5 1001.0 447.2C1000.4 451.8 999.8 456.5 999.1 461.2C998.4 465.9 997.7 470.5 997.0 475.2C996.2 479.9 995.5 484.6 994.6 489.3C993.8 493.9 993.0 498.6 992.1 503.3C991.2 508.0 990.3 512.6 989.3 517.3C988.4 522.0 987.4 526.7 986.3 531.4C985.3 536.0 984.2 540.7 983.1 545.4C982.0 550.1 980.9 554.7 979.7 559.4C978.5 564.1 977.3 568.8 976.0 573.5C974.8 578.1 973.5 582.8 972.2 587.5C970.8 592.2 969.5 596.8 968.1 601.5C966.7 606.2 965.2 610.9 963.7 615.6C962.3 620.2 960.7 624.9 959.2 629.6C957.6 634.3 956.0 638.9 954.4 643.6C952.7 648.3 951.0 653.0 949.3 657.7C947.6 662.3 945.8 667.0 944.0 671.7C942.2 676.4 940.4 681.1 938.5 685.7C936.6 690.4 934.7 695.1 932.7 699.8C930.7 704.4 928.7 709.1 926.7 713.8C924.6 718.5 922.5 723.2 920.4 727.8C918.2 732.5 916.0 737.2 913.8 741.9C911.5 746.5 909.3 751.2 906.9 755.9C904.6 760.6 902.2 765.3 899.8 769.9C897.3 774.6 894.9 779.3 892.3 784.0C889.8 788.6 885.9 795.7 884.6 798.0L892.6 798.0C893.9 795.7 897.8 788.6 900.3 784.0C902.9 779.3 905.3 774.6 907.8 769.9C910.2 765.3 912.6 760.6 914.9 755.9C917.3 751.2 919.5 746.5 921.8 741.9C924.0 737.2 926.2 732.5 928.4 727.8C930.5 723.2 932.6 718.5 934.7 713.8C936.7 709.1 938.7 704.4 940.7 699.8C942.7 695.1 944.6 690.4 946.5 685.7C948.4 681.1 950.2 676.4 952.0 671.7C953.8 667.0 955.6 662.3 957.3 657.7C959.0 653.0 960.7 648.3 962.4 643.6C964.0 638.9 965.7 634.3 967.2 629.6C968.6 624.9 969.9 620.2 971.3 615.6C972.6 610.9 973.9 606.2 975.2 601.5C976.4 596.8 977.6 592.2 978.8 587.5C980.0 582.8 981.1 578.1 982.2 573.5C983.3 568.8 984.4 564.1 985.4 559.4C986.5 554.7 987.5 550.1 988.4 545.4C989.4 540.7 990.3 536.0 991.2 531.4C992.1 526.7 992.9 522.0 993.7 517.3C994.5 512.6 995.3 508.0 996.0 503.3C996.8 498.6 997.5 493.9 998.1 489.3C998.8 484.6 999.4 479.9 1000.0 475.2C1000.6 470.5 1001.2 465.9 1001.7 461.2C1002.2 456.5 1002.7 451.8 1003.1 447.2C1003.6 442.5 1004.0 437.8 1004.4 433.1C1004.8 428.4 1005.1 423.8 1005.4 419.1C1005.7 414.4 1006.0 409.7 1006.2 405.1C1006.4 400.4 1006.6 395.7 1006.8 391.0C1006.9 386.3 1007.0 381.7 1007.2 377.0C1007.4 372.3 1007.6 367.6 1007.8 362.9C1007.9 358.3 1008.1 353.6 1008.1 348.9C1008.2 344.2 1008.2 339.6 1008.2 334.9C1008.2 330.2 1008.2 325.5 1008.1 320.8C1008.0 316.2 1007.9 311.5 1007.8 306.8C1007.6 302.1 1007.4 297.5 1007.1 292.8C1006.9 288.1 1006.6 283.4 1006.3 278.7C1006.0 274.1 1005.6 269.4 1005.2 264.7C1004.8 260.0 1004.3 255.4 1003.8 250.7C1003.3 246.0 1002.8 241.3 1002.2 236.6C1001.6 232.0 1001.0 227.3 1000.3 222.6C999.6 217.9 998.9 213.3 998.1 208.6C997.4 203.9 996.6 199.2 995.7 194.5C994.8 189.9 993.9 185.2 993.0 180.5C992.0 175.8 991.0 171.2 989.9 166.5C988.9 161.8 987.7 157.1 986.6 152.4C985.4 147.8 984.2 143.1 982.9 138.4C981.7 133.7 980.3 129.1 979.0 124.4C977.6 119.7 976.2 115.0 974.7 110.3C973.2 105.7 971.7 101.0 970.1 96.3C968.5 91.6 966.8 86.9 965.1 82.3C963.4 77.6 961.6 72.9 959.7 68.2C957.9 63.6 956.0 58.9 954.1 54.2C952.1 49.5 950.1 44.8 948.0 40.2C945.9 35.5 943.7 30.8 941.5 26.1C939.3 21.5 937.0 16.8 934.7 12.1C932.3 7.4 929.9 2.7 927.4 -1.9C924.9 -6.6 922.4 -11.3 919.7 -16.0C917.1 -20.6 913.0 -27.7 911.6 -30.0Z" fill="#8e2652" filter="url(#b1)"/>
<path d="M911.6 -30.0C913.0 -27.7 917.1 -20.6 919.7 -16.0C922.4 -11.3 924.9 -6.6 927.4 -1.9C929.9 2.7 932.3 7.4 934.7 12.1C937.0 16.8 939.3 21.5 941.5 26.1C943.7 30.8 945.9 35.5 948.0 40.2C950.1 44.8 952.1 49.5 954.1 54.2C956.0 58.9 957.9 63.6 959.7 68.2C961.6 72.9 963.4 77.6 965.1 82.3C966.8 86.9 968.5 91.6 970.1 96.3C971.7 101.0 973.2 105.7 974.7 110.3C976.2 115.0 977.6 119.7 979.0 124.4C980.3 129.1 981.7 133.7 982.9 138.4C984.2 143.1 985.4 147.8 986.6 152.4C987.7 157.1 988.9 161.8 989.9 166.5C991.0 171.2 992.0 175.8 993.0 180.5C993.9 185.2 994.8 189.9 995.7 194.5C996.6 199.2 997.4 203.9 998.1 208.6C998.9 213.3 999.6 217.9 1000.3 222.6C1001.0 227.3 1001.6 232.0 1002.2 236.6C1002.8 241.3 1003.3 246.0 1003.8 250.7C1004.3 255.4 1004.8 260.0 1005.2 264.7C1005.6 269.4 1006.0 274.1 1006.3 278.7C1006.6 283.4 1006.9 288.1 1007.1 292.8C1007.4 297.5 1007.6 302.1 1007.8 306.8C1007.9 311.5 1008.0 316.2 1008.1 320.8C1008.2 325.5 1008.2 330.2 1008.2 334.9C1008.2 339.6 1008.2 344.2 1008.1 348.9C1008.1 353.6 1007.9 358.3 1007.8 362.9C1007.6 367.6 1007.4 372.3 1007.2 377.0C1007.0 381.7 1006.7 386.3 1006.4 391.0C1006.1 395.7 1005.8 400.4 1005.4 405.1C1005.0 409.7 1004.6 414.4 1004.1 419.1C1003.7 423.8 1003.2 428.4 1002.7 433.1C1002.2 437.8 1001.6 442.5 1001.0 447.2C1000.4 451.8 999.8 456.5 999.1 461.2C998.4 465.9 997.7 470.5 997.0 475.2C996.2 479.9 995.5 484.6 994.6 489.3C993.8 493.9 993.0 498.6 992.1 503.3C991.2 508.0 990.3 512.6 989.3 517.3C988.4 522.0 987.4 526.7 986.3 531.4C985.3 536.0 984.2 540.7 983.1 545.4C982.0 550.1 980.9 554.7 979.7 559.4C978.5 564.1 977.3 568.8 976.0 573.5C974.8 578.1 973.5 582.8 972.2 587.5C970.8 592.2 969.5 596.8 968.1 601.5C966.7 606.2 965.2 610.9 963.7 615.6C962.3 620.2 960.7 624.9 959.2 629.6C957.6 634.3 956.0 638.9 954.4 643.6C952.7 648.3 951.0 653.0 949.3 657.7C947.6 662.3 945.8 667.0 944.0 671.7C942.2 676.4 940.4 681.1 938.5 685.7C936.6 690.4 934.7 695.1 932.7 699.8C930.7 704.4 928.7 709.1 926.7 713.8C924.6 718.5 922.5 723.2 920.4 727.8C918.2 732.5 916.0 737.2 913.8 741.9C911.5 746.5 909.3 751.2 906.9 755.9C904.6 760.6 902.2 765.3 899.8 769.9C897.3 774.6 894.9 779.3 892.3 784.0C889.8 788.6 885.9 795.7 884.6 798.0L889.2 798.0C890.5 795.7 894.4 788.6 896.9 784.0C899.5 779.3 901.9 774.6 904.4 769.9C906.8 765.3 909.2 760.6 911.5 755.9C913.9 751.2 916.1 746.5 918.4 741.9C920.6 737.2 922.8 732.5 925.0 727.8C927.1 723.2 929.2 718.5 931.3 713.8C933.3 709.1 935.3 704.4 937.3 699.8C939.3 695.1 941.2 690.4 943.1 685.7C945.0 681.1 946.8 676.4 948.6 671.7C950.4 667.0 952.2 662.3 953.9 657.7C955.6 653.0 957.3 648.3 959.0 643.6C960.6 638.9 962.2 634.3 963.8 629.6C965.3 624.9 966.7 620.2 968.1 615.6C969.5 610.9 970.8 606.2 972.1 601.5C973.5 596.8 974.7 592.2 976.0 587.5C977.2 582.8 978.4 578.1 979.6 573.5C980.8 568.8 981.9 564.1 983.0 559.4C984.1 554.7 985.1 550.1 986.2 545.4C987.2 540.7 988.2 536.0 989.1 531.4C990.1 526.7 991.0 522.0 991.8 517.3C992.7 512.6 993.6 508.0 994.4 503.3C995.2 498.6 995.9 493.9 996.6 489.3C997.4 484.6 998.1 479.9 998.7 475.2C999.4 470.5 1000.0 465.9 1000.6 461.2C1001.2 456.5 1001.7 451.8 1002.2 447.2C1002.7 442.5 1003.2 437.8 1003.7 433.1C1004.1 428.4 1004.5 423.8 1004.9 419.1C1005.2 414.4 1005.6 409.7 1005.8 405.1C1006.1 400.4 1006.4 395.7 1006.6 391.0C1006.8 386.3 1007.0 381.7 1007.2 377.0C1007.4 372.3 1007.6 367.6 1007.8 362.9C1007.9 358.3 1008.1 353.6 1008.1 348.9C1008.2 344.2 1008.2 339.6 1008.2 334.9C1008.2 330.2 1008.2 325.5 1008.1 320.8C1008.0 316.2 1007.9 311.5 1007.8 306.8C1007.6 302.1 1007.4 297.5 1007.1 292.8C1006.9 288.1 1006.6 283.4 1006.3 278.7C1006.0 274.1 1005.6 269.4 1005.2 264.7C1004.8 260.0 1004.3 255.4 1003.8 250.7C1003.3 246.0 1002.8 241.3 1002.2 236.6C1001.6 232.0 1001.0 227.3 1000.3 222.6C999.6 217.9 998.9 213.3 998.1 208.6C997.4 203.9 996.6 199.2 995.7 194.5C994.8 189.9 993.9 185.2 993.0 180.5C992.0 175.8 991.0 171.2 989.9 166.5C988.9 161.8 987.7 157.1 986.6 152.4C985.4 147.8 984.2 143.1 982.9 138.4C981.7 133.7 980.3 129.1 979.0 124.4C977.6 119.7 976.2 115.0 974.7 110.3C973.2 105.7 971.7 101.0 970.1 96.3C968.5 91.6 966.8 86.9 965.1 82.3C963.4 77.6 961.6 72.9 959.7 68.2C957.9 63.6 956.0 58.9 954.1 54.2C952.1 49.5 950.1 44.8 948.0 40.2C945.9 35.5 943.7 30.8 941.5 26.1C939.3 21.5 937.0 16.8 934.7 12.1C932.3 7.4 929.9 2.7 927.4 -1.9C924.9 -6.6 922.4 -11.3 919.7 -16.0C917.1 -20.6 913.0 -27.7 911.6 -30.0Z" fill="#b42e48" />
<path d="M905.1 -30.0C906.5 -27.7 910.6 -20.6 913.2 -16.0C915.9 -11.3 918.4 -6.6 920.9 -1.9C923.4 2.7 925.8 7.4 928.2 12.1C930.5 16.8 932.8 21.5 935.0 26.1C937.2 30.8 939.4 35.5 941.5 40.2C943.6 44.8 945.6 49.5 947.6 54.2C949.5 58.9 951.4 63.6 953.2 68.2C955.1 72.9 956.9 77.6 958.6 82.3C960.3 86.9 962.0 91.6 963.6 96.3C965.2 101.0 966.6 105.7 968.2 110.3C969.7 115.0 971.4 119.7 972.9 124.4C974.4 129.1 975.9 133.7 977.3 138.4C978.7 143.1 980.0 147.8 981.3 152.4C982.6 157.1 983.9 161.8 985.1 166.5C986.3 171.2 987.4 175.8 988.5 180.5C989.6 185.2 990.7 189.9 991.7 194.5C992.7 199.2 993.6 203.9 994.6 208.6C995.5 213.3 996.3 217.9 997.1 222.6C998.0 227.3 998.7 232.0 999.4 236.6C1000.2 241.3 1000.8 246.0 1001.5 250.7C1002.1 255.4 1002.7 260.0 1003.3 264.7C1003.8 269.4 1004.3 274.1 1004.8 278.7C1005.2 283.4 1005.7 288.1 1006.0 292.8C1006.4 297.5 1006.8 302.1 1007.1 306.8C1007.4 311.5 1007.7 316.2 1007.8 320.8C1008.0 325.5 1008.2 330.2 1008.2 334.9C1008.3 339.6 1008.2 344.2 1008.1 348.9C1008.1 353.6 1007.9 358.3 1007.8 362.9C1007.6 367.6 1007.4 372.3 1007.2 377.0C1007.0 381.7 1006.7 386.3 1006.4 391.0C1006.1 395.7 1005.8 400.4 1005.4 405.1C1005.0 409.7 1004.6 414.4 1004.1 419.1C1003.7 423.8 1003.2 428.4 1002.7 433.1C1002.2 437.8 1001.6 442.5 1001.0 447.2C1000.4 451.8 999.8 456.5 999.1 461.2C998.4 465.9 997.7 470.5 997.0 475.2C996.2 479.9 995.5 484.6 994.6 489.3C993.8 493.9 993.0 498.6 992.1 503.3C991.2 508.0 990.3 512.6 989.3 517.3C988.4 522.0 987.4 526.7 986.3 531.4C985.3 536.0 984.2 540.7 983.1 545.4C982.0 550.1 980.9 554.7 979.7 559.4C978.5 564.1 977.3 568.8 976.0 573.5C974.8 578.1 973.5 582.8 972.2 587.5C970.8 592.2 969.5 596.8 968.1 601.5C966.7 606.2 965.2 610.9 963.7 615.6C962.3 620.2 960.7 624.9 959.2 629.6C957.6 634.3 956.0 638.9 954.4 643.6C952.7 648.3 951.0 653.0 949.3 657.7C947.6 662.3 945.8 667.0 944.0 671.7C942.2 676.4 940.4 681.1 938.5 685.7C936.6 690.4 934.7 695.1 932.7 699.8C930.7 704.4 928.7 709.1 926.7 713.8C924.6 718.5 922.5 723.2 920.4 727.8C918.2 732.5 916.0 737.2 913.8 741.9C911.5 746.5 909.3 751.2 906.9 755.9C904.6 760.6 902.2 765.3 899.8 769.9C897.3 774.6 894.9 779.3 892.3 784.0C889.8 788.6 885.9 795.7 884.6 798.0L884.6 798.0C885.9 795.7 889.8 788.6 892.3 784.0C894.9 779.3 897.3 774.6 899.8 769.9C902.2 765.3 904.6 760.6 906.9 755.9C909.3 751.2 911.5 746.5 913.8 741.9C916.0 737.2 918.2 732.5 920.4 727.8C922.5 723.2 924.6 718.5 926.7 713.8C928.7 709.1 930.7 704.4 932.7 699.8C934.7 695.1 936.6 690.4 938.5 685.7C940.4 681.1 942.2 676.4 944.0 671.7C945.8 667.0 947.6 662.3 949.3 657.7C951.0 653.0 952.7 648.3 954.4 643.6C956.0 638.9 957.6 634.3 959.2 629.6C960.7 624.9 962.3 620.2 963.7 615.6C965.2 610.9 966.7 606.2 968.1 601.5C969.5 596.8 970.8 592.2 972.2 587.5C973.5 582.8 974.8 578.1 976.0 573.5C977.3 568.8 978.5 564.1 979.7 559.4C980.9 554.7 982.0 550.1 983.1 545.4C984.2 540.7 985.3 536.0 986.3 531.4C987.4 526.7 988.4 522.0 989.3 517.3C990.3 512.6 991.2 508.0 992.1 503.3C993.0 498.6 993.8 493.9 994.6 489.3C995.5 484.6 996.2 479.9 997.0 475.2C997.7 470.5 998.4 465.9 999.1 461.2C999.8 456.5 1000.4 451.8 1001.0 447.2C1001.6 442.5 1002.2 437.8 1002.7 433.1C1003.2 428.4 1003.7 423.8 1004.1 419.1C1004.6 414.4 1005.0 409.7 1005.4 405.1C1005.8 400.4 1006.1 395.7 1006.4 391.0C1006.7 386.3 1007.0 381.7 1007.2 377.0C1007.4 372.3 1007.6 367.6 1007.8 362.9C1007.9 358.3 1008.1 353.6 1008.1 348.9C1008.2 344.2 1008.2 339.6 1008.2 334.9C1008.2 330.2 1008.2 325.5 1008.1 320.8C1008.0 316.2 1007.9 311.5 1007.8 306.8C1007.6 302.1 1007.4 297.5 1007.1 292.8C1006.9 288.1 1006.6 283.4 1006.3 278.7C1006.0 274.1 1005.6 269.4 1005.2 264.7C1004.8 260.0 1004.3 255.4 1003.8 250.7C1003.3 246.0 1002.8 241.3 1002.2 236.6C1001.6 232.0 1001.0 227.3 1000.3 222.6C999.6 217.9 998.9 213.3 998.1 208.6C997.4 203.9 996.6 199.2 995.7 194.5C994.8 189.9 993.9 185.2 993.0 180.5C992.0 175.8 991.0 171.2 989.9 166.5C988.9 161.8 987.7 157.1 986.6 152.4C985.4 147.8 984.2 143.1 982.9 138.4C981.7 133.7 980.3 129.1 979.0 124.4C977.6 119.7 976.2 115.0 974.7 110.3C973.2 105.7 971.7 101.0 970.1 96.3C968.5 91.6 966.8 86.9 965.1 82.3C963.4 77.6 961.6 72.9 959.7 68.2C957.9 63.6 956.0 58.9 954.1 54.2C952.1 49.5 950.1 44.8 948.0 40.2C945.9 35.5 943.7 30.8 941.5 26.1C939.3 21.5 937.0 16.8 934.7 12.1C932.3 7.4 929.9 2.7 927.4 -1.9C924.9 -6.6 922.4 -11.3 919.7 -16.0C917.1 -20.6 913.0 -27.7 911.6 -30.0Z" fill="#46286c" />
<path d="M907.6 -30.0C909.0 -27.7 913.1 -20.6 915.7 -16.0C918.4 -11.3 920.9 -6.6 923.4 -1.9C925.9 2.7 928.3 7.4 930.7 12.1C933.0 16.8 935.3 21.5 937.5 26.1C939.7 30.8 941.9 35.5 944.0 40.2C946.1 44.8 948.1 49.5 950.1 54.2C952.0 58.9 953.9 63.6 955.7 68.2C957.6 72.9 959.4 77.6 961.1 82.3C962.8 86.9 964.5 91.6 966.1 96.3C967.7 101.0 969.2 105.7 970.7 110.3C972.2 115.0 973.8 119.7 975.2 124.4C976.7 129.1 978.1 133.7 979.5 138.4C980.8 143.1 982.1 147.8 983.4 152.4C984.6 157.1 985.8 161.8 986.9 166.5C988.1 171.2 989.2 175.8 990.2 180.5C991.3 185.2 992.3 189.9 993.2 194.5C994.2 199.2 995.1 203.9 995.9 208.6C996.8 213.3 997.6 217.9 998.4 222.6C999.1 227.3 999.8 232.0 1000.5 236.6C1001.2 241.3 1001.8 246.0 1002.4 250.7C1003.0 255.4 1003.5 260.0 1004.0 264.7C1004.5 269.4 1005.0 274.1 1005.4 278.7C1005.8 283.4 1006.1 288.1 1006.5 292.8C1006.8 297.5 1007.1 302.1 1007.3 306.8C1007.6 311.5 1007.8 316.2 1007.9 320.8C1008.1 325.5 1008.2 330.2 1008.2 334.9C1008.3 339.6 1008.2 344.2 1008.1 348.9C1008.1 353.6 1007.9 358.3 1007.8 362.9C1007.6 367.6 1007.4 372.3 1007.2 377.0C1007.0 381.7 1006.7 386.3 1006.4 391.0C1006.1 395.7 1005.8 400.4 1005.4 405.1C1005.0 409.7 1004.6 414.4 1004.1 419.1C1003.7 423.8 1003.2 428.4 1002.7 433.1C1002.2 437.8 1001.6 442.5 1001.0 447.2C1000.4 451.8 999.8 456.5 999.1 461.2C998.4 465.9 997.7 470.5 997.0 475.2C996.2 479.9 995.5 484.6 994.6 489.3C993.8 493.9 993.0 498.6 992.1 503.3C991.2 508.0 990.3 512.6 989.3 517.3C988.4 522.0 987.4 526.7 986.3 531.4C985.3 536.0 984.2 540.7 983.1 545.4C982.0 550.1 980.9 554.7 979.7 559.4C978.5 564.1 977.3 568.8 976.0 573.5C974.8 578.1 973.5 582.8 972.2 587.5C970.8 592.2 969.5 596.8 968.1 601.5C966.7 606.2 965.2 610.9 963.7 615.6C962.3 620.2 960.7 624.9 959.2 629.6C957.6 634.3 956.0 638.9 954.4 643.6C952.7 648.3 951.0 653.0 949.3 657.7C947.6 662.3 945.8 667.0 944.0 671.7C942.2 676.4 940.4 681.1 938.5 685.7C936.6 690.4 934.7 695.1 932.7 699.8C930.7 704.4 928.7 709.1 926.7 713.8C924.6 718.5 922.5 723.2 920.4 727.8C918.2 732.5 916.0 737.2 913.8 741.9C911.5 746.5 909.3 751.2 906.9 755.9C904.6 760.6 902.2 765.3 899.8 769.9C897.3 774.6 894.9 779.3 892.3 784.0C889.8 788.6 885.9 795.7 884.6 798.0L884.6 798.0C885.9 795.7 889.8 788.6 892.3 784.0C894.9 779.3 897.3 774.6 899.8 769.9C902.2 765.3 904.6 760.6 906.9 755.9C909.3 751.2 911.5 746.5 913.8 741.9C916.0 737.2 918.2 732.5 920.4 727.8C922.5 723.2 924.6 718.5 926.7 713.8C928.7 709.1 930.7 704.4 932.7 699.8C934.7 695.1 936.6 690.4 938.5 685.7C940.4 681.1 942.2 676.4 944.0 671.7C945.8 667.0 947.6 662.3 949.3 657.7C951.0 653.0 952.7 648.3 954.4 643.6C956.0 638.9 957.6 634.3 959.2 629.6C960.7 624.9 962.3 620.2 963.7 615.6C965.2 610.9 966.7 606.2 968.1 601.5C969.5 596.8 970.8 592.2 972.2 587.5C973.5 582.8 974.8 578.1 976.0 573.5C977.3 568.8 978.5 564.1 979.7 559.4C980.9 554.7 982.0 550.1 983.1 545.4C984.2 540.7 985.3 536.0 986.3 531.4C987.4 526.7 988.4 522.0 989.3 517.3C990.3 512.6 991.2 508.0 992.1 503.3C993.0 498.6 993.8 493.9 994.6 489.3C995.5 484.6 996.2 479.9 997.0 475.2C997.7 470.5 998.4 465.9 999.1 461.2C999.8 456.5 1000.4 451.8 1001.0 447.2C1001.6 442.5 1002.2 437.8 1002.7 433.1C1003.2 428.4 1003.7 423.8 1004.1 419.1C1004.6 414.4 1005.0 409.7 1005.4 405.1C1005.8 400.4 1006.1 395.7 1006.4 391.0C1006.7 386.3 1007.0 381.7 1007.2 377.0C1007.4 372.3 1007.6 367.6 1007.8 362.9C1007.9 358.3 1008.1 353.6 1008.1 348.9C1008.2 344.2 1008.2 339.6 1008.2 334.9C1008.2 330.2 1008.2 325.5 1008.1 320.8C1008.0 316.2 1007.9 311.5 1007.8 306.8C1007.6 302.1 1007.4 297.5 1007.1 292.8C1006.9 288.1 1006.6 283.4 1006.3 278.7C1006.0 274.1 1005.6 269.4 1005.2 264.7C1004.8 260.0 1004.3 255.4 1003.8 250.7C1003.3 246.0 1002.8 241.3 1002.2 236.6C1001.6 232.0 1001.0 227.3 1000.3 222.6C999.6 217.9 998.9 213.3 998.1 208.6C997.4 203.9 996.6 199.2 995.7 194.5C994.8 189.9 993.9 185.2 993.0 180.5C992.0 175.8 991.0 171.2 989.9 166.5C988.9 161.8 987.7 157.1 986.6 152.4C985.4 147.8 984.2 143.1 982.9 138.4C981.7 133.7 980.3 129.1 979.0 124.4C977.6 119.7 976.2 115.0 974.7 110.3C973.2 105.7 971.7 101.0 970.1 96.3C968.5 91.6 966.8 86.9 965.1 82.3C963.4 77.6 961.6 72.9 959.7 68.2C957.9 63.6 956.0 58.9 954.1 54.2C952.1 49.5 950.1 44.8 948.0 40.2C945.9 35.5 943.7 30.8 941.5 26.1C939.3 21.5 937.0 16.8 934.7 12.1C932.3 7.4 929.9 2.7 927.4 -1.9C924.9 -6.6 922.4 -11.3 919.7 -16.0C917.1 -20.6 913.0 -27.7 911.6 -30.0Z" fill="#b8303e" />
<path d="M910.0 -30.0C911.4 -27.7 915.5 -20.6 918.1 -16.0C920.8 -11.3 923.3 -6.6 925.8 -1.9C928.3 2.7 930.7 7.4 933.1 12.1C935.4 16.8 937.7 21.5 939.9 26.1C942.1 30.8 944.3 35.5 946.4 40.2C948.5 44.8 950.5 49.5 952.5 54.2C954.4 58.9 956.3 63.6 958.1 68.2C960.0 72.9 961.8 77.6 963.5 82.3C965.2 86.9 966.9 91.6 968.5 96.3C970.1 101.0 971.6 105.7 973.1 110.3C974.6 115.0 976.1 119.7 977.5 124.4C978.9 129.1 980.2 133.7 981.5 138.4C982.8 143.1 984.1 147.8 985.3 152.4C986.5 157.1 987.6 161.8 988.7 166.5C989.8 171.2 990.9 175.8 991.9 180.5C992.9 185.2 993.8 189.9 994.7 194.5C995.6 199.2 996.5 203.9 997.3 208.6C998.1 213.3 998.8 217.9 999.5 222.6C1000.2 227.3 1000.9 232.0 1001.5 236.6C1002.1 241.3 1002.7 246.0 1003.3 250.7C1003.8 255.4 1004.3 260.0 1004.7 264.7C1005.2 269.4 1005.6 274.1 1005.9 278.7C1006.3 283.4 1006.6 288.1 1006.9 292.8C1007.2 297.5 1007.4 302.1 1007.6 306.8C1007.8 311.5 1007.9 316.2 1008.0 320.8C1008.2 325.5 1008.2 330.2 1008.2 334.9C1008.3 339.6 1008.2 344.2 1008.1 348.9C1008.1 353.6 1007.9 358.3 1007.8 362.9C1007.6 367.6 1007.4 372.3 1007.2 377.0C1007.0 381.7 1006.7 386.3 1006.4 391.0C1006.1 395.7 1005.8 400.4 1005.4 405.1C1005.0 409.7 1004.6 414.4 1004.1 419.1C1003.7 423.8 1003.2 428.4 1002.7 433.1C1002.2 437.8 1001.6 442.5 1001.0 447.2C1000.4 451.8 999.8 456.5 999.1 461.2C998.4 465.9 997.7 470.5 997.0 475.2C996.2 479.9 995.5 484.6 994.6 489.3C993.8 493.9 993.0 498.6 992.1 503.3C991.2 508.0 990.3 512.6 989.3 517.3C988.4 522.0 987.4 526.7 986.3 531.4C985.3 536.0 984.2 540.7 983.1 545.4C982.0 550.1 980.9 554.7 979.7 559.4C978.5 564.1 977.3 568.8 976.0 573.5C974.8 578.1 973.5 582.8 972.2 587.5C970.8 592.2 969.5 596.8 968.1 601.5C966.7 606.2 965.2 610.9 963.7 615.6C962.3 620.2 960.7 624.9 959.2 629.6C957.6 634.3 956.0 638.9 954.4 643.6C952.7 648.3 951.0 653.0 949.3 657.7C947.6 662.3 945.8 667.0 944.0 671.7C942.2 676.4 940.4 681.1 938.5 685.7C936.6 690.4 934.7 695.1 932.7 699.8C930.7 704.4 928.7 709.1 926.7 713.8C924.6 718.5 922.5 723.2 920.4 727.8C918.2 732.5 916.0 737.2 913.8 741.9C911.5 746.5 909.3 751.2 906.9 755.9C904.6 760.6 902.2 765.3 899.8 769.9C897.3 774.6 894.9 779.3 892.3 784.0C889.8 788.6 885.9 795.7 884.6 798.0L884.6 798.0C885.9 795.7 889.8 788.6 892.3 784.0C894.9 779.3 897.3 774.6 899.8 769.9C902.2 765.3 904.6 760.6 906.9 755.9C909.3 751.2 911.5 746.5 913.8 741.9C916.0 737.2 918.2 732.5 920.4 727.8C922.5 723.2 924.6 718.5 926.7 713.8C928.7 709.1 930.7 704.4 932.7 699.8C934.7 695.1 936.6 690.4 938.5 685.7C940.4 681.1 942.2 676.4 944.0 671.7C945.8 667.0 947.6 662.3 949.3 657.7C951.0 653.0 952.7 648.3 954.4 643.6C956.0 638.9 957.6 634.3 959.2 629.6C960.7 624.9 962.3 620.2 963.7 615.6C965.2 610.9 966.7 606.2 968.1 601.5C969.5 596.8 970.8 592.2 972.2 587.5C973.5 582.8 974.8 578.1 976.0 573.5C977.3 568.8 978.5 564.1 979.7 559.4C980.9 554.7 982.0 550.1 983.1 545.4C984.2 540.7 985.3 536.0 986.3 531.4C987.4 526.7 988.4 522.0 989.3 517.3C990.3 512.6 991.2 508.0 992.1 503.3C993.0 498.6 993.8 493.9 994.6 489.3C995.5 484.6 996.2 479.9 997.0 475.2C997.7 470.5 998.4 465.9 999.1 461.2C999.8 456.5 1000.4 451.8 1001.0 447.2C1001.6 442.5 1002.2 437.8 1002.7 433.1C1003.2 428.4 1003.7 423.8 1004.1 419.1C1004.6 414.4 1005.0 409.7 1005.4 405.1C1005.8 400.4 1006.1 395.7 1006.4 391.0C1006.7 386.3 1007.0 381.7 1007.2 377.0C1007.4 372.3 1007.6 367.6 1007.8 362.9C1007.9 358.3 1008.1 353.6 1008.1 348.9C1008.2 344.2 1008.2 339.6 1008.2 334.9C1008.2 330.2 1008.2 325.5 1008.1 320.8C1008.0 316.2 1007.9 311.5 1007.8 306.8C1007.6 302.1 1007.4 297.5 1007.1 292.8C1006.9 288.1 1006.6 283.4 1006.3 278.7C1006.0 274.1 1005.6 269.4 1005.2 264.7C1004.8 260.0 1004.3 255.4 1003.8 250.7C1003.3 246.0 1002.8 241.3 1002.2 236.6C1001.6 232.0 1001.0 227.3 1000.3 222.6C999.6 217.9 998.9 213.3 998.1 208.6C997.4 203.9 996.6 199.2 995.7 194.5C994.8 189.9 993.9 185.2 993.0 180.5C992.0 175.8 991.0 171.2 989.9 166.5C988.9 161.8 987.7 157.1 986.6 152.4C985.4 147.8 984.2 143.1 982.9 138.4C981.7 133.7 980.3 129.1 979.0 124.4C977.6 119.7 976.2 115.0 974.7 110.3C973.2 105.7 971.7 101.0 970.1 96.3C968.5 91.6 966.8 86.9 965.1 82.3C963.4 77.6 961.6 72.9 959.7 68.2C957.9 63.6 956.0 58.9 954.1 54.2C952.1 49.5 950.1 44.8 948.0 40.2C945.9 35.5 943.7 30.8 941.5 26.1C939.3 21.5 937.0 16.8 934.7 12.1C932.3 7.4 929.9 2.7 927.4 -1.9C924.9 -6.6 922.4 -11.3 919.7 -16.0C917.1 -20.6 913.0 -27.7 911.6 -30.0Z" fill="#f0983a" />
<path d="M911.6 -30.0C913.0 -27.7 917.1 -20.6 919.7 -16.0C922.4 -11.3 924.9 -6.6 927.4 -1.9C929.9 2.7 932.3 7.4 934.7 12.1C937.0 16.8 939.3 21.5 941.5 26.1C943.7 30.8 945.9 35.5 948.0 40.2C950.1 44.8 952.1 49.5 954.1 54.2C956.0 58.9 957.9 63.6 959.7 68.2C961.6 72.9 963.4 77.6 965.1 82.3C966.8 86.9 968.5 91.6 970.1 96.3C971.7 101.0 973.2 105.7 974.7 110.3C976.2 115.0 977.6 119.7 979.0 124.4C980.3 129.1 981.7 133.7 982.9 138.4C984.2 143.1 985.4 147.8 986.6 152.4C987.7 157.1 988.9 161.8 989.9 166.5C991.0 171.2 992.0 175.8 993.0 180.5C993.9 185.2 994.8 189.9 995.7 194.5C996.6 199.2 997.4 203.9 998.1 208.6C998.9 213.3 999.6 217.9 1000.3 222.6C1001.0 227.3 1001.6 232.0 1002.2 236.6C1002.8 241.3 1003.3 246.0 1003.8 250.7C1004.3 255.4 1004.8 260.0 1005.2 264.7C1005.6 269.4 1006.0 274.1 1006.3 278.7C1006.6 283.4 1006.9 288.1 1007.1 292.8C1007.4 297.5 1007.6 302.1 1007.8 306.8C1007.9 311.5 1008.0 316.2 1008.1 320.8C1008.2 325.5 1008.2 330.2 1008.2 334.9C1008.2 339.6 1008.2 344.2 1008.1 348.9C1008.1 353.6 1007.9 358.3 1007.8 362.9C1007.6 367.6 1007.4 372.3 1007.2 377.0C1007.0 381.7 1006.7 386.3 1006.4 391.0C1006.1 395.7 1005.8 400.4 1005.4 405.1C1005.0 409.7 1004.6 414.4 1004.1 419.1C1003.7 423.8 1003.2 428.4 1002.7 433.1C1002.2 437.8 1001.6 442.5 1001.0 447.2C1000.4 451.8 999.8 456.5 999.1 461.2C998.4 465.9 997.7 470.5 997.0 475.2C996.2 479.9 995.5 484.6 994.6 489.3C993.8 493.9 993.0 498.6 992.1 503.3C991.2 508.0 990.3 512.6 989.3 517.3C988.4 522.0 987.4 526.7 986.3 531.4C985.3 536.0 984.2 540.7 983.1 545.4C982.0 550.1 980.9 554.7 979.7 559.4C978.5 564.1 977.3 568.8 976.0 573.5C974.8 578.1 973.5 582.8 972.2 587.5C970.8 592.2 969.5 596.8 968.1 601.5C966.7 606.2 965.2 610.9 963.7 615.6C962.3 620.2 960.7 624.9 959.2 629.6C957.6 634.3 956.0 638.9 954.4 643.6C952.7 648.3 951.0 653.0 949.3 657.7C947.6 662.3 945.8 667.0 944.0 671.7C942.2 676.4 940.4 681.1 938.5 685.7C936.6 690.4 934.7 695.1 932.7 699.8C930.7 704.4 928.7 709.1 926.7 713.8C924.6 718.5 922.5 723.2 920.4 727.8C918.2 732.5 916.0 737.2 913.8 741.9C911.5 746.5 909.3 751.2 906.9 755.9C904.6 760.6 902.2 765.3 899.8 769.9C897.3 774.6 894.9 779.3 892.3 784.0C889.8 788.6 885.9 795.7 884.6 798.0" fill="none" stroke="#e0603c" stroke-width="1.2" />
<path d="M902.6 -30.0C904.0 -27.7 908.1 -20.6 910.7 -16.0C913.4 -11.3 915.9 -6.6 918.4 -1.9C920.9 2.7 923.3 7.4 925.7 12.1C928.0 16.8 930.3 21.5 932.5 26.1C934.7 30.8 936.9 35.5 939.0 40.2C941.1 44.8 943.1 49.5 945.1 54.2C947.0 58.9 948.9 63.6 950.7 68.2C952.6 72.9 954.4 77.6 956.1 82.3C957.8 86.9 959.4 91.6 961.1 96.3C962.7 101.0 964.4 105.7 966.1 110.3C967.7 115.0 969.3 119.7 970.9 124.4C972.4 129.1 973.9 133.7 975.4 138.4C976.8 143.1 978.2 147.8 979.6 152.4C980.9 157.1 982.2 161.8 983.4 166.5C984.7 171.2 985.8 175.8 987.0 180.5C988.1 185.2 989.2 189.9 990.2 194.5C991.3 199.2 992.3 203.9 993.2 208.6C994.2 213.3 995.1 217.9 995.9 222.6C996.8 227.3 997.6 232.0 998.3 236.6C999.1 241.3 999.8 246.0 1000.5 250.7C1001.2 255.4 1001.8 260.0 1002.4 264.7C1003.0 269.4 1003.5 274.1 1004.0 278.7C1004.5 283.4 1005.0 288.1 1005.4 292.8C1005.8 297.5 1006.0 302.1 1006.3 306.8C1006.5 311.5 1006.5 316.2 1006.6 320.8C1006.7 325.5 1006.7 330.2 1006.7 334.9C1006.7 339.6 1006.7 344.2 1006.6 348.9C1006.6 353.6 1006.4 358.3 1006.3 362.9C1006.1 367.6 1005.9 372.3 1005.7 377.0C1005.5 381.7 1005.2 386.3 1004.9 391.0C1004.6 395.7 1004.3 400.4 1003.9 405.1C1003.5 409.7 1003.1 414.4 1002.6 419.1C1002.2 423.8 1001.7 428.4 1001.2 433.1C1000.7 437.8 1000.1 442.5 999.5 447.2C998.9 451.8 998.3 456.5 997.6 461.2C996.9 465.9 996.2 470.5 995.5 475.2C994.7 479.9 994.0 484.6 993.1 489.3C992.3 493.9 991.5 498.6 990.6 503.3C989.7 508.0 988.8 512.6 987.8 517.3C986.9 522.0 985.9 526.7 984.8 531.4C983.8 536.0 982.7 540.7 981.6 545.4C980.5 550.1 979.4 554.7 978.2 559.4C977.0 564.1 975.8 568.8 974.5 573.5C973.3 578.1 972.0 582.8 970.7 587.5C969.3 592.2 968.0 596.8 966.6 601.5C965.2 606.2 963.7 610.9 962.2 615.6C960.8 620.2 959.2 624.9 957.7 629.6C956.1 634.3 954.5 638.9 952.9 643.6C951.2 648.3 949.5 653.0 947.8 657.7C946.1 662.3 944.3 667.0 942.5 671.7C940.7 676.4 938.9 681.1 937.0 685.7C935.1 690.4 933.2 695.1 931.2 699.8C929.2 704.4 927.2 709.1 925.2 713.8C923.1 718.5 921.0 723.2 918.9 727.8C916.7 732.5 914.5 737.2 912.3 741.9C910.0 746.5 907.8 751.2 905.4 755.9C903.1 760.6 900.7 765.3 898.3 769.9C895.8 774.6 893.4 779.3 890.8 784.0C888.3 788.6 884.4 795.7 883.1 798.0" fill="none" stroke="#7a2a4a" stroke-width="0.8" opacity="0.7"/>
<path d="M1035.3 -30.0C1037.2 -22.3 1043.2 0.7 1047.0 16.0C1050.8 31.3 1054.5 46.7 1057.9 62.0C1061.4 77.3 1064.8 92.7 1067.9 108.0C1071.0 123.3 1073.9 138.7 1076.5 154.0C1079.1 169.3 1081.5 184.7 1083.6 200.0C1085.7 215.3 1087.5 230.7 1089.0 246.0C1090.5 261.3 1091.7 276.7 1092.6 292.0C1093.5 307.3 1094.0 322.7 1094.2 338.0C1094.4 353.3 1094.2 368.7 1093.7 384.0C1093.2 399.3 1092.3 414.7 1091.1 430.0C1089.9 445.3 1088.3 460.7 1086.4 476.0C1084.5 491.3 1082.2 506.7 1079.6 522.0C1077.0 537.3 1074.0 552.7 1070.7 568.0C1067.4 583.3 1063.8 598.7 1059.8 614.0C1055.9 629.3 1051.6 644.7 1047.1 660.0C1042.6 675.3 1037.8 690.7 1032.7 706.0C1027.7 721.3 1022.3 736.7 1016.8 752.0C1011.3 767.3 1002.5 790.3 999.6 798.0" fill="none" stroke="#3a2450" stroke-width="10" filter="url(#b4)" opacity="0.6"/>
<path d="M1035.3 -30.0C1037.2 -22.3 1043.2 0.7 1047.0 16.0C1050.8 31.3 1054.5 46.7 1057.9 62.0C1061.4 77.3 1064.8 92.7 1067.9 108.0C1071.0 123.3 1073.9 138.7 1076.5 154.0C1079.1 169.3 1081.5 184.7 1083.6 200.0C1085.7 215.3 1087.5 230.7 1089.0 246.0C1090.5 261.3 1091.7 276.7 1092.6 292.0C1093.5 307.3 1094.0 322.7 1094.2 338.0C1094.4 353.3 1094.2 368.7 1093.7 384.0C1093.2 399.3 1092.3 414.7 1091.1 430.0C1089.9 445.3 1088.3 460.7 1086.4 476.0C1084.5 491.3 1082.2 506.7 1079.6 522.0C1077.0 537.3 1074.0 552.7 1070.7 568.0C1067.4 583.3 1063.8 598.7 1059.8 614.0C1055.9 629.3 1051.6 644.7 1047.1 660.0C1042.6 675.3 1037.8 690.7 1032.7 706.0C1027.7 721.3 1022.3 736.7 1016.8 752.0C1011.3 767.3 1002.5 790.3 999.6 798.0L1190.1 798.0C1190.0 790.3 1189.9 767.3 1189.9 752.0C1189.9 736.7 1190.0 721.3 1190.0 706.0C1190.1 690.7 1190.2 675.3 1190.2 660.0C1190.3 644.7 1190.3 629.3 1190.3 614.0C1190.2 598.7 1190.2 583.3 1190.0 568.0C1189.8 552.7 1189.5 537.3 1189.1 522.0C1188.7 506.7 1188.3 491.3 1187.6 476.0C1187.0 460.7 1186.2 445.3 1185.3 430.0C1184.3 414.7 1183.2 399.3 1182.0 384.0C1180.7 368.7 1179.3 353.3 1177.7 338.0C1176.1 322.7 1174.3 307.3 1172.3 292.0C1170.4 276.7 1168.2 261.3 1165.8 246.0C1163.5 230.7 1161.0 215.3 1158.2 200.0C1155.5 184.7 1152.6 169.3 1149.5 154.0C1146.4 138.7 1143.2 123.3 1139.7 108.0C1136.3 92.7 1132.6 77.3 1128.9 62.0C1125.1 46.7 1121.1 31.3 1117.1 16.0C1113.0 0.7 1106.5 -22.3 1104.4 -30.0Z" fill="#e29a3e" />
<path d="M1037.6 -30.0C1039.5 -22.3 1045.5 0.7 1049.3 16.0C1053.1 31.3 1056.8 46.7 1060.2 62.0C1063.7 77.3 1067.1 92.7 1070.2 108.0C1073.3 123.3 1076.2 138.7 1078.8 154.0C1081.4 169.3 1083.8 184.7 1085.9 200.0C1088.0 215.3 1089.8 230.7 1091.3 246.0C1092.8 261.3 1094.0 276.7 1094.9 292.0C1095.8 307.3 1096.3 322.7 1096.5 338.0C1096.7 353.3 1096.5 368.7 1096.0 384.0C1095.5 399.3 1094.6 414.7 1093.4 430.0C1092.2 445.3 1090.6 460.7 1088.7 476.0C1086.8 491.3 1084.5 506.7 1081.9 522.0C1079.3 537.3 1076.3 552.7 1073.0 568.0C1069.7 583.3 1066.1 598.7 1062.1 614.0C1058.2 629.3 1053.9 644.7 1049.4 660.0C1044.9 675.3 1040.1 690.7 1035.0 706.0C1030.0 721.3 1024.6 736.7 1019.1 752.0C1013.6 767.3 1004.8 790.3 1001.9 798.0L1190.1 798.0C1190.0 790.3 1189.9 767.3 1189.9 752.0C1189.9 736.7 1190.0 721.3 1190.0 706.0C1190.1 690.7 1190.2 675.3 1190.2 660.0C1190.3 644.7 1190.3 629.3 1190.3 614.0C1190.2 598.7 1190.2 583.3 1190.0 568.0C1189.8 552.7 1189.5 537.3 1189.1 522.0C1188.7 506.7 1188.3 491.3 1187.6 476.0C1187.0 460.7 1186.2 445.3 1185.3 430.0C1184.3 414.7 1183.2 399.3 1182.0 384.0C1180.7 368.7 1179.3 353.3 1177.7 338.0C1176.1 322.7 1174.3 307.3 1172.3 292.0C1170.4 276.7 1168.2 261.3 1165.8 246.0C1163.5 230.7 1161.0 215.3 1158.2 200.0C1155.5 184.7 1152.6 169.3 1149.5 154.0C1146.4 138.7 1143.2 123.3 1139.7 108.0C1136.3 92.7 1132.6 77.3 1128.9 62.0C1125.1 46.7 1121.1 31.3 1117.1 16.0C1113.0 0.7 1106.5 -22.3 1104.4 -30.0Z" fill="#c47c40" />
<path d="M1041.0 -30.0C1042.8 -22.3 1048.5 0.7 1052.1 16.0C1055.8 31.3 1059.4 46.7 1062.8 62.0C1066.1 77.3 1069.4 92.7 1072.5 108.0C1075.5 123.3 1078.4 138.7 1081.0 154.0C1083.6 169.3 1086.0 184.7 1088.2 200.0C1090.3 215.3 1092.1 230.7 1093.7 246.0C1095.2 261.3 1096.4 276.7 1097.4 292.0C1098.3 307.3 1098.9 322.7 1099.1 338.0C1099.4 353.3 1099.3 368.7 1098.9 384.0C1098.4 399.3 1097.6 414.7 1096.5 430.0C1095.4 445.3 1093.9 460.7 1092.1 476.0C1090.2 491.3 1088.0 506.7 1085.5 522.0C1083.0 537.3 1080.1 552.7 1077.0 568.0C1073.8 583.3 1070.3 598.7 1066.5 614.0C1062.7 629.3 1058.6 644.7 1054.2 660.0C1049.9 675.3 1045.2 690.7 1040.3 706.0C1035.5 721.3 1030.3 736.7 1025.0 752.0C1019.7 767.3 1011.3 790.3 1008.6 798.0L1190.1 798.0C1190.0 790.3 1189.9 767.3 1189.9 752.0C1189.9 736.7 1190.0 721.3 1190.0 706.0C1190.1 690.7 1190.2 675.3 1190.2 660.0C1190.3 644.7 1190.3 629.3 1190.3 614.0C1190.2 598.7 1190.2 583.3 1190.0 568.0C1189.8 552.7 1189.5 537.3 1189.1 522.0C1188.7 506.7 1188.3 491.3 1187.6 476.0C1187.0 460.7 1186.2 445.3 1185.3 430.0C1184.3 414.7 1183.2 399.3 1182.0 384.0C1180.7 368.7 1179.3 353.3 1177.7 338.0C1176.1 322.7 1174.3 307.3 1172.3 292.0C1170.4 276.7 1168.2 261.3 1165.8 246.0C1163.5 230.7 1161.0 215.3 1158.2 200.0C1155.5 184.7 1152.6 169.3 1149.5 154.0C1146.4 138.7 1143.2 123.3 1139.7 108.0C1136.3 92.7 1132.6 77.3 1128.9 62.0C1125.1 46.7 1121.1 31.3 1117.1 16.0C1113.0 0.7 1106.5 -22.3 1104.4 -30.0Z" fill="#b83046" />
<path d="M1044.9 -30.0C1046.8 -22.3 1052.8 0.7 1056.6 16.0C1060.3 31.3 1064.0 46.7 1067.5 62.0C1071.0 77.3 1074.3 92.7 1077.4 108.0C1080.5 123.3 1083.5 138.7 1086.1 154.0C1088.8 169.3 1091.2 184.7 1093.3 200.0C1095.4 215.3 1097.3 230.7 1098.9 246.0C1100.4 261.3 1101.7 276.7 1102.7 292.0C1103.6 307.3 1104.2 322.7 1104.5 338.0C1104.8 353.3 1104.8 368.7 1104.5 384.0C1104.1 399.3 1103.4 414.7 1102.4 430.0C1101.3 445.3 1100.0 460.7 1098.3 476.0C1096.6 491.3 1094.6 506.7 1092.3 522.0C1089.9 537.3 1087.3 552.7 1084.3 568.0C1081.4 583.3 1078.1 598.7 1074.6 614.0C1071.1 629.3 1067.3 644.7 1063.3 660.0C1059.3 675.3 1055.0 690.7 1050.5 706.0C1046.0 721.3 1041.3 736.7 1036.5 752.0C1031.6 767.3 1023.9 790.3 1021.4 798.0L1190.1 798.0C1190.0 790.3 1189.9 767.3 1189.9 752.0C1189.9 736.7 1190.0 721.3 1190.0 706.0C1190.1 690.7 1190.2 675.3 1190.2 660.0C1190.3 644.7 1190.3 629.3 1190.3 614.0C1190.2 598.7 1190.2 583.3 1190.0 568.0C1189.8 552.7 1189.5 537.3 1189.1 522.0C1188.7 506.7 1188.3 491.3 1187.6 476.0C1187.0 460.7 1186.2 445.3 1185.3 430.0C1184.3 414.7 1183.2 399.3 1182.0 384.0C1180.7 368.7 1179.3 353.3 1177.7 338.0C1176.1 322.7 1174.3 307.3 1172.3 292.0C1170.4 276.7 1168.2 261.3 1165.8 246.0C1163.5 230.7 1161.0 215.3 1158.2 200.0C1155.5 184.7 1152.6 169.3 1149.5 154.0C1146.4 138.7 1143.2 123.3 1139.7 108.0C1136.3 92.7 1132.6 77.3 1128.9 62.0C1125.1 46.7 1121.1 31.3 1117.1 16.0C1113.0 0.7 1106.5 -22.3 1104.4 -30.0Z" fill="#8c2244" />
<path d="M1053.2 -30.0C1055.1 -22.3 1061.0 0.7 1064.7 16.0C1068.4 31.3 1072.0 46.7 1075.4 62.0C1078.7 77.3 1082.0 92.7 1085.0 108.0C1088.0 123.3 1090.9 138.7 1093.4 154.0C1096.0 169.3 1098.4 184.7 1100.5 200.0C1102.6 215.3 1104.5 230.7 1106.1 246.0C1107.7 261.3 1109.0 276.7 1110.0 292.0C1111.0 307.3 1111.8 322.7 1112.2 338.0C1112.7 353.3 1112.8 368.7 1112.7 384.0C1112.5 399.3 1112.0 414.7 1111.2 430.0C1110.5 445.3 1109.4 460.7 1108.0 476.0C1106.6 491.3 1104.9 506.7 1102.9 522.0C1100.9 537.3 1098.5 552.7 1095.9 568.0C1093.3 583.3 1090.4 598.7 1087.2 614.0C1084.0 629.3 1080.6 644.7 1076.8 660.0C1073.1 675.3 1069.1 690.7 1064.9 706.0C1060.6 721.3 1056.1 736.7 1051.4 752.0C1046.7 767.3 1039.2 790.3 1036.7 798.0L1190.1 798.0C1190.0 790.3 1189.9 767.3 1189.9 752.0C1189.9 736.7 1190.0 721.3 1190.0 706.0C1190.1 690.7 1190.2 675.3 1190.2 660.0C1190.3 644.7 1190.3 629.3 1190.3 614.0C1190.2 598.7 1190.2 583.3 1190.0 568.0C1189.8 552.7 1189.5 537.3 1189.1 522.0C1188.7 506.7 1188.3 491.3 1187.6 476.0C1187.0 460.7 1186.2 445.3 1185.3 430.0C1184.3 414.7 1183.2 399.3 1182.0 384.0C1180.7 368.7 1179.3 353.3 1177.7 338.0C1176.1 322.7 1174.3 307.3 1172.3 292.0C1170.4 276.7 1168.2 261.3 1165.8 246.0C1163.5 230.7 1161.0 215.3 1158.2 200.0C1155.5 184.7 1152.6 169.3 1149.5 154.0C1146.4 138.7 1143.2 123.3 1139.7 108.0C1136.3 92.7 1132.6 77.3 1128.9 62.0C1125.1 46.7 1121.1 31.3 1117.1 16.0C1113.0 0.7 1106.5 -22.3 1104.4 -30.0Z" fill="#7c2046" />
<path d="M1061.4 -30.0C1063.4 -22.3 1069.4 0.7 1073.2 16.0C1077.0 31.3 1080.8 46.7 1084.4 62.0C1087.9 77.3 1091.4 92.7 1094.6 108.0C1097.9 123.3 1100.9 138.7 1103.7 154.0C1106.5 169.3 1109.1 184.7 1111.4 200.0C1113.7 215.3 1115.7 230.7 1117.4 246.0C1119.1 261.3 1120.6 276.7 1121.7 292.0C1122.8 307.3 1123.7 322.7 1124.2 338.0C1124.7 353.3 1124.9 368.7 1124.7 384.0C1124.6 399.3 1124.2 414.7 1123.5 430.0C1122.7 445.3 1121.7 460.7 1120.4 476.0C1119.1 491.3 1117.5 506.7 1115.6 522.0C1113.8 537.3 1111.7 552.7 1109.4 568.0C1107.1 583.3 1104.5 598.7 1101.8 614.0C1099.1 629.3 1096.2 644.7 1093.2 660.0C1090.3 675.3 1087.1 690.7 1084.0 706.0C1080.8 721.3 1077.5 736.7 1074.3 752.0C1071.2 767.3 1066.4 790.3 1064.8 798.0L1190.1 798.0C1190.0 790.3 1189.9 767.3 1189.9 752.0C1189.9 736.7 1190.0 721.3 1190.0 706.0C1190.1 690.7 1190.2 675.3 1190.2 660.0C1190.3 644.7 1190.3 629.3 1190.3 614.0C1190.2 598.7 1190.2 583.3 1190.0 568.0C1189.8 552.7 1189.5 537.3 1189.1 522.0C1188.7 506.7 1188.3 491.3 1187.6 476.0C1187.0 460.7 1186.2 445.3 1185.3 430.0C1184.3 414.7 1183.2 399.3 1182.0 384.0C1180.7 368.7 1179.3 353.3 1177.7 338.0C1176.1 322.7 1174.3 307.3 1172.3 292.0C1170.4 276.7 1168.2 261.3 1165.8 246.0C1163.5 230.7 1161.0 215.3 1158.2 200.0C1155.5 184.7 1152.6 169.3 1149.5 154.0C1146.4 138.7 1143.2 123.3 1139.7 108.0C1136.3 92.7 1132.6 77.3 1128.9 62.0C1125.1 46.7 1121.1 31.3 1117.1 16.0C1113.0 0.7 1106.5 -22.3 1104.4 -30.0Z" fill="#6e2050" />
<path d="M1075.3 -30.0C1077.2 -22.3 1082.9 0.7 1086.5 16.0C1090.1 31.3 1093.7 46.7 1097.1 62.0C1100.5 77.3 1103.8 92.7 1106.9 108.0C1110.0 123.3 1113.0 138.7 1115.7 154.0C1118.5 169.3 1121.1 184.7 1123.4 200.0C1125.7 215.3 1127.8 230.7 1129.7 246.0C1131.6 261.3 1133.2 276.7 1134.6 292.0C1136.0 307.3 1137.2 322.7 1138.0 338.0C1138.9 353.3 1139.5 368.7 1139.8 384.0C1140.2 399.3 1140.3 414.7 1140.1 430.0C1139.9 445.3 1139.5 460.7 1138.8 476.0C1138.1 491.3 1137.1 506.7 1135.9 522.0C1134.7 537.3 1133.2 552.7 1131.6 568.0C1129.9 583.3 1128.0 598.7 1125.9 614.0C1123.8 629.3 1121.5 644.7 1119.0 660.0C1116.6 675.3 1113.9 690.7 1111.1 706.0C1108.3 721.3 1105.4 736.7 1102.4 752.0C1099.4 767.3 1094.6 790.3 1093.0 798.0L1190.1 798.0C1190.0 790.3 1189.9 767.3 1189.9 752.0C1189.9 736.7 1190.0 721.3 1190.0 706.0C1190.1 690.7 1190.2 675.3 1190.2 660.0C1190.3 644.7 1190.3 629.3 1190.3 614.0C1190.2 598.7 1190.2 583.3 1190.0 568.0C1189.8 552.7 1189.5 537.3 1189.1 522.0C1188.7 506.7 1188.3 491.3 1187.6 476.0C1187.0 460.7 1186.2 445.3 1185.3 430.0C1184.3 414.7 1183.2 399.3 1182.0 384.0C1180.7 368.7 1179.3 353.3 1177.7 338.0C1176.1 322.7 1174.3 307.3 1172.3 292.0C1170.4 276.7 1168.2 261.3 1165.8 246.0C1163.5 230.7 1161.0 215.3 1158.2 200.0C1155.5 184.7 1152.6 169.3 1149.5 154.0C1146.4 138.7 1143.2 123.3 1139.7 108.0C1136.3 92.7 1132.6 77.3 1128.9 62.0C1125.1 46.7 1121.1 31.3 1117.1 16.0C1113.0 0.7 1106.5 -22.3 1104.4 -30.0Z" fill="#60225a" />
<path d="M1084.8 -30.0C1086.8 -22.3 1092.7 0.7 1096.5 16.0C1100.3 31.3 1104.1 46.7 1107.7 62.0C1111.2 77.3 1114.7 92.7 1118.0 108.0C1121.3 123.3 1124.4 138.7 1127.4 154.0C1130.3 169.3 1133.0 184.7 1135.6 200.0C1138.1 215.3 1140.4 230.7 1142.5 246.0C1144.6 261.3 1146.4 276.7 1148.1 292.0C1149.7 307.3 1151.0 322.7 1152.2 338.0C1153.3 353.3 1154.2 368.7 1154.8 384.0C1155.5 399.3 1155.9 414.7 1156.1 430.0C1156.2 445.3 1156.2 460.7 1155.9 476.0C1155.6 491.3 1155.0 506.7 1154.3 522.0C1153.6 537.3 1152.6 552.7 1151.5 568.0C1150.4 583.3 1149.1 598.7 1147.6 614.0C1146.2 629.3 1144.5 644.7 1142.8 660.0C1141.1 675.3 1139.2 690.7 1137.3 706.0C1135.3 721.3 1133.3 736.7 1131.2 752.0C1129.2 767.3 1126.0 790.3 1125.0 798.0L1190.1 798.0C1190.0 790.3 1189.9 767.3 1189.9 752.0C1189.9 736.7 1190.0 721.3 1190.0 706.0C1190.1 690.7 1190.2 675.3 1190.2 660.0C1190.3 644.7 1190.3 629.3 1190.3 614.0C1190.2 598.7 1190.2 583.3 1190.0 568.0C1189.8 552.7 1189.5 537.3 1189.1 522.0C1188.7 506.7 1188.3 491.3 1187.6 476.0C1187.0 460.7 1186.2 445.3 1185.3 430.0C1184.3 414.7 1183.2 399.3 1182.0 384.0C1180.7 368.7 1179.3 353.3 1177.7 338.0C1176.1 322.7 1174.3 307.3 1172.3 292.0C1170.4 276.7 1168.2 261.3 1165.8 246.0C1163.5 230.7 1161.0 215.3 1158.2 200.0C1155.5 184.7 1152.6 169.3 1149.5 154.0C1146.4 138.7 1143.2 123.3 1139.7 108.0C1136.3 92.7 1132.6 77.3 1128.9 62.0C1125.1 46.7 1121.1 31.3 1117.1 16.0C1113.0 0.7 1106.5 -22.3 1104.4 -30.0Z" fill="#50225f" />
<path d="M1104.4 -30.0C1106.5 -22.3 1113.0 0.7 1117.1 16.0C1121.1 31.3 1125.1 46.7 1128.9 62.0C1132.6 77.3 1136.3 92.7 1139.7 108.0C1143.2 123.3 1146.4 138.7 1149.5 154.0C1152.6 169.3 1155.5 184.7 1158.2 200.0C1161.0 215.3 1163.5 230.7 1165.8 246.0C1168.2 261.3 1170.4 276.7 1172.3 292.0C1174.3 307.3 1176.1 322.7 1177.7 338.0C1179.3 353.3 1180.7 368.7 1182.0 384.0C1183.2 399.3 1184.3 414.7 1185.3 430.0C1186.2 445.3 1187.0 460.7 1187.6 476.0C1188.3 491.3 1188.7 506.7 1189.1 522.0C1189.5 537.3 1189.8 552.7 1190.0 568.0C1190.2 583.3 1190.2 598.7 1190.3 614.0C1190.3 629.3 1190.3 644.7 1190.2 660.0C1190.2 675.3 1190.1 690.7 1190.0 706.0C1190.0 721.3 1189.9 736.7 1189.9 752.0C1189.9 767.3 1190.0 790.3 1190.1 798.0L1343.6 798.0C1341.6 790.3 1335.4 767.3 1331.5 752.0C1327.6 736.7 1323.8 721.3 1320.1 706.0C1316.4 690.7 1312.8 675.3 1309.3 660.0C1305.8 644.7 1302.3 629.3 1298.9 614.0C1295.5 598.7 1292.2 583.3 1288.9 568.0C1285.6 552.7 1282.3 537.3 1279.1 522.0C1275.8 506.7 1272.6 491.3 1269.4 476.0C1266.2 460.7 1263.0 445.3 1259.7 430.0C1256.5 414.7 1253.3 399.3 1250.0 384.0C1246.7 368.7 1243.4 353.3 1240.1 338.0C1236.7 322.7 1233.3 307.3 1229.9 292.0C1226.4 276.7 1222.9 261.3 1219.3 246.0C1215.7 230.7 1212.0 215.3 1208.2 200.0C1204.5 184.7 1200.6 169.3 1196.6 154.0C1192.7 138.7 1188.6 123.3 1184.4 108.0C1180.2 92.7 1175.9 77.3 1171.4 62.0C1166.9 46.7 1162.3 31.3 1157.6 16.0C1152.8 0.7 1145.3 -22.3 1142.9 -30.0Z" fill="#2e1b4a" />
<path d="M1136.2 -30.0C1138.1 -22.3 1144.1 0.7 1147.8 16.0C1151.6 31.3 1155.3 46.7 1158.9 62.0C1162.4 77.3 1165.9 92.7 1169.2 108.0C1172.5 123.3 1175.6 138.7 1178.6 154.0C1181.7 169.3 1184.5 184.7 1187.2 200.0C1190.0 215.3 1192.5 230.7 1194.9 246.0C1197.4 261.3 1199.6 276.7 1201.8 292.0C1203.9 307.3 1205.9 322.7 1207.7 338.0C1209.6 353.3 1211.3 368.7 1212.9 384.0C1214.5 399.3 1216.0 414.7 1217.4 430.0C1218.7 445.3 1220.0 460.7 1221.2 476.0C1222.4 491.3 1223.6 506.7 1224.6 522.0C1225.7 537.3 1226.8 552.7 1227.8 568.0C1228.8 583.3 1229.8 598.7 1230.8 614.0C1231.9 629.3 1232.9 644.7 1234.0 660.0C1235.2 675.3 1236.3 690.7 1237.6 706.0C1238.9 721.3 1240.3 736.7 1241.9 752.0C1243.4 767.3 1246.2 790.3 1247.1 798.0L1343.6 798.0C1341.6 790.3 1335.4 767.3 1331.5 752.0C1327.6 736.7 1323.8 721.3 1320.1 706.0C1316.4 690.7 1312.8 675.3 1309.3 660.0C1305.8 644.7 1302.3 629.3 1298.9 614.0C1295.5 598.7 1292.2 583.3 1288.9 568.0C1285.6 552.7 1282.3 537.3 1279.1 522.0C1275.8 506.7 1272.6 491.3 1269.4 476.0C1266.2 460.7 1263.0 445.3 1259.7 430.0C1256.5 414.7 1253.3 399.3 1250.0 384.0C1246.7 368.7 1243.4 353.3 1240.1 338.0C1236.7 322.7 1233.3 307.3 1229.9 292.0C1226.4 276.7 1222.9 261.3 1219.3 246.0C1215.7 230.7 1212.0 215.3 1208.2 200.0C1204.5 184.7 1200.6 169.3 1196.6 154.0C1192.7 138.7 1188.6 123.3 1184.4 108.0C1180.2 92.7 1175.9 77.3 1171.4 62.0C1166.9 46.7 1162.3 31.3 1157.6 16.0C1152.8 0.7 1145.3 -22.3 1142.9 -30.0Z" fill="#271c52" filter="url(#b8)"/>
<path d="M1142.9 -30.0C1145.3 -22.3 1152.8 0.7 1157.6 16.0C1162.3 31.3 1166.9 46.7 1171.4 62.0C1175.9 77.3 1180.2 92.7 1184.4 108.0C1188.6 123.3 1192.7 138.7 1196.6 154.0C1200.6 169.3 1204.5 184.7 1208.2 200.0C1212.0 215.3 1215.7 230.7 1219.3 246.0C1222.9 261.3 1226.4 276.7 1229.9 292.0C1233.3 307.3 1236.7 322.7 1240.1 338.0C1243.4 353.3 1246.7 368.7 1250.0 384.0C1253.3 399.3 1256.5 414.7 1259.7 430.0C1263.0 445.3 1266.2 460.7 1269.4 476.0C1272.6 491.3 1275.8 506.7 1279.1 522.0C1282.3 537.3 1285.6 552.7 1288.9 568.0C1292.2 583.3 1295.5 598.7 1298.9 614.0C1302.3 629.3 1305.8 644.7 1309.3 660.0C1312.8 675.3 1316.4 690.7 1320.1 706.0C1323.8 721.3 1327.6 736.7 1331.5 752.0C1335.4 767.3 1341.6 790.3 1343.6 798.0" fill="none" stroke="#4a3058" stroke-width="12" filter="url(#b4)" opacity="0.55"/>
<path d="M1142.9 -30.0C1145.3 -22.3 1152.8 0.7 1157.6 16.0C1162.3 31.3 1166.9 46.7 1171.4 62.0C1175.9 77.3 1180.2 92.7 1184.4 108.0C1188.6 123.3 1192.7 138.7 1196.6 154.0C1200.6 169.3 1204.5 184.7 1208.2 200.0C1212.0 215.3 1215.7 230.7 1219.3 246.0C1222.9 261.3 1226.4 276.7 1229.9 292.0C1233.3 307.3 1236.7 322.7 1240.1 338.0C1243.4 353.3 1246.7 368.7 1250.0 384.0C1253.3 399.3 1256.5 414.7 1259.7 430.0C1263.0 445.3 1266.2 460.7 1269.4 476.0C1272.6 491.3 1275.8 506.7 1279.1 522.0C1282.3 537.3 1285.6 552.7 1288.9 568.0C1292.2 583.3 1295.5 598.7 1298.9 614.0C1302.3 629.3 1305.8 644.7 1309.3 660.0C1312.8 675.3 1316.4 690.7 1320.1 706.0C1323.8 721.3 1327.6 736.7 1331.5 752.0C1335.4 767.3 1341.6 790.3 1343.6 798.0L1885.0 798.0C1881.2 790.3 1869.7 767.3 1862.0 752.0C1854.3 736.7 1846.7 721.3 1839.0 706.0C1831.3 690.7 1823.7 675.3 1816.0 660.0C1808.3 644.7 1800.7 629.3 1793.0 614.0C1785.3 598.7 1777.7 583.3 1770.0 568.0C1762.3 552.7 1754.7 537.3 1747.0 522.0C1739.3 506.7 1731.7 491.3 1724.0 476.0C1716.3 460.7 1708.7 445.3 1701.0 430.0C1693.3 414.7 1685.7 399.3 1678.0 384.0C1670.3 368.7 1662.7 353.3 1655.0 338.0C1647.3 322.7 1639.7 307.3 1632.0 292.0C1624.3 276.7 1616.7 261.3 1609.0 246.0C1601.3 230.7 1593.7 215.3 1586.0 200.0C1578.3 184.7 1570.7 169.3 1563.0 154.0C1555.3 138.7 1547.7 123.3 1540.0 108.0C1532.3 92.7 1524.7 77.3 1517.0 62.0C1509.3 46.7 1501.7 31.3 1494.0 16.0C1486.3 0.7 1474.8 -22.3 1471.0 -30.0Z" fill="#e5994d" />
<path d="M1149.2 -30.0C1151.7 -22.3 1159.3 0.7 1164.1 16.0C1168.9 31.3 1173.6 46.7 1178.1 62.0C1182.7 77.3 1187.1 92.7 1191.4 108.0C1195.7 123.3 1199.9 138.7 1204.0 154.0C1208.1 169.3 1212.1 184.7 1216.0 200.0C1219.9 215.3 1223.7 230.7 1227.4 246.0C1231.2 261.3 1234.9 276.7 1238.5 292.0C1242.1 307.3 1245.7 322.7 1249.2 338.0C1252.7 353.3 1256.2 368.7 1259.7 384.0C1263.1 399.3 1266.6 414.7 1270.0 430.0C1273.5 445.3 1276.9 460.7 1280.3 476.0C1283.8 491.3 1287.3 506.7 1290.8 522.0C1294.3 537.3 1297.8 552.7 1301.4 568.0C1305.0 583.3 1308.7 598.7 1312.4 614.0C1316.2 629.3 1320.0 644.7 1323.9 660.0C1327.8 675.3 1331.8 690.7 1336.0 706.0C1340.1 721.3 1344.4 736.7 1348.8 752.0C1353.3 767.3 1360.3 790.3 1362.6 798.0L1885.0 798.0C1881.2 790.3 1869.7 767.3 1862.0 752.0C1854.3 736.7 1846.7 721.3 1839.0 706.0C1831.3 690.7 1823.7 675.3 1816.0 660.0C1808.3 644.7 1800.7 629.3 1793.0 614.0C1785.3 598.7 1777.7 583.3 1770.0 568.0C1762.3 552.7 1754.7 537.3 1747.0 522.0C1739.3 506.7 1731.7 491.3 1724.0 476.0C1716.3 460.7 1708.7 445.3 1701.0 430.0C1693.3 414.7 1685.7 399.3 1678.0 384.0C1670.3 368.7 1662.7 353.3 1655.0 338.0C1647.3 322.7 1639.7 307.3 1632.0 292.0C1624.3 276.7 1616.7 261.3 1609.0 246.0C1601.3 230.7 1593.7 215.3 1586.0 200.0C1578.3 184.7 1570.7 169.3 1563.0 154.0C1555.3 138.7 1547.7 123.3 1540.0 108.0C1532.3 92.7 1524.7 77.3 1517.0 62.0C1509.3 46.7 1501.7 31.3 1494.0 16.0C1486.3 0.7 1474.8 -22.3 1471.0 -30.0Z" fill="#d9744c" />
<path d="M1154.9 -30.0C1157.4 -22.3 1165.2 0.7 1170.1 16.0C1175.0 31.3 1179.7 46.7 1184.3 62.0C1188.9 77.3 1193.4 92.7 1197.8 108.0C1202.1 123.3 1206.3 138.7 1210.5 154.0C1214.6 169.3 1218.7 184.7 1222.7 200.0C1226.6 215.3 1230.5 230.7 1234.4 246.0C1238.2 261.3 1242.0 276.7 1245.7 292.0C1249.5 307.3 1253.2 322.7 1256.9 338.0C1260.6 353.3 1264.2 368.7 1267.9 384.0C1271.6 399.3 1275.2 414.7 1278.9 430.0C1282.6 445.3 1286.3 460.7 1290.0 476.0C1293.8 491.3 1297.5 506.7 1301.4 522.0C1305.2 537.3 1309.1 552.7 1313.0 568.0C1317.0 583.3 1320.9 598.7 1325.0 614.0C1329.1 629.3 1333.3 644.7 1337.6 660.0C1341.9 675.3 1346.2 690.7 1350.7 706.0C1355.2 721.3 1359.8 736.7 1364.6 752.0C1369.3 767.3 1376.7 790.3 1379.2 798.0L1885.0 798.0C1881.2 790.3 1869.7 767.3 1862.0 752.0C1854.3 736.7 1846.7 721.3 1839.0 706.0C1831.3 690.7 1823.7 675.3 1816.0 660.0C1808.3 644.7 1800.7 629.3 1793.0 614.0C1785.3 598.7 1777.7 583.3 1770.0 568.0C1762.3 552.7 1754.7 537.3 1747.0 522.0C1739.3 506.7 1731.7 491.3 1724.0 476.0C1716.3 460.7 1708.7 445.3 1701.0 430.0C1693.3 414.7 1685.7 399.3 1678.0 384.0C1670.3 368.7 1662.7 353.3 1655.0 338.0C1647.3 322.7 1639.7 307.3 1632.0 292.0C1624.3 276.7 1616.7 261.3 1609.0 246.0C1601.3 230.7 1593.7 215.3 1586.0 200.0C1578.3 184.7 1570.7 169.3 1563.0 154.0C1555.3 138.7 1547.7 123.3 1540.0 108.0C1532.3 92.7 1524.7 77.3 1517.0 62.0C1509.3 46.7 1501.7 31.3 1494.0 16.0C1486.3 0.7 1474.8 -22.3 1471.0 -30.0Z" fill="#cf394e" />
<path d="M1165.2 -30.0C1167.8 -22.3 1175.6 0.7 1180.5 16.0C1185.5 31.3 1190.3 46.7 1195.1 62.0C1199.8 77.3 1204.5 92.7 1209.0 108.0C1213.6 123.3 1218.0 138.7 1222.4 154.0C1226.8 169.3 1231.0 184.7 1235.3 200.0C1239.5 215.3 1243.7 230.7 1247.9 246.0C1252.0 261.3 1256.1 276.7 1260.2 292.0C1264.3 307.3 1268.3 322.7 1272.4 338.0C1276.4 353.3 1280.5 368.7 1284.5 384.0C1288.6 399.3 1292.6 414.7 1296.7 430.0C1300.8 445.3 1305.0 460.7 1309.1 476.0C1313.3 491.3 1317.5 506.7 1321.8 522.0C1326.1 537.3 1330.5 552.7 1334.9 568.0C1339.4 583.3 1343.9 598.7 1348.5 614.0C1353.2 629.3 1357.9 644.7 1362.8 660.0C1367.7 675.3 1372.7 690.7 1377.8 706.0C1383.0 721.3 1388.3 736.7 1393.7 752.0C1399.2 767.3 1407.8 790.3 1410.6 798.0L1885.0 798.0C1881.2 790.3 1869.7 767.3 1862.0 752.0C1854.3 736.7 1846.7 721.3 1839.0 706.0C1831.3 690.7 1823.7 675.3 1816.0 660.0C1808.3 644.7 1800.7 629.3 1793.0 614.0C1785.3 598.7 1777.7 583.3 1770.0 568.0C1762.3 552.7 1754.7 537.3 1747.0 522.0C1739.3 506.7 1731.7 491.3 1724.0 476.0C1716.3 460.7 1708.7 445.3 1701.0 430.0C1693.3 414.7 1685.7 399.3 1678.0 384.0C1670.3 368.7 1662.7 353.3 1655.0 338.0C1647.3 322.7 1639.7 307.3 1632.0 292.0C1624.3 276.7 1616.7 261.3 1609.0 246.0C1601.3 230.7 1593.7 215.3 1586.0 200.0C1578.3 184.7 1570.7 169.3 1563.0 154.0C1555.3 138.7 1547.7 123.3 1540.0 108.0C1532.3 92.7 1524.7 77.3 1517.0 62.0C1509.3 46.7 1501.7 31.3 1494.0 16.0C1486.3 0.7 1474.8 -22.3 1471.0 -30.0Z" fill="#a8274e" />
<path d="M1182.3 -30.0C1184.9 -22.3 1192.7 0.7 1197.8 16.0C1202.9 31.3 1208.0 46.7 1213.0 62.0C1218.0 77.3 1223.0 92.7 1227.9 108.0C1232.8 123.3 1237.7 138.7 1242.6 154.0C1247.4 169.3 1252.2 184.7 1257.0 200.0C1261.8 215.3 1266.5 230.7 1271.2 246.0C1276.0 261.3 1280.6 276.7 1285.3 292.0C1290.0 307.3 1294.6 322.7 1299.3 338.0C1303.9 353.3 1308.5 368.7 1313.2 384.0C1317.8 399.3 1322.4 414.7 1327.0 430.0C1331.7 445.3 1336.3 460.7 1341.0 476.0C1345.6 491.3 1350.3 506.7 1355.0 522.0C1359.7 537.3 1364.5 552.7 1369.3 568.0C1374.1 583.3 1378.9 598.7 1383.8 614.0C1388.7 629.3 1393.6 644.7 1398.7 660.0C1403.7 675.3 1408.8 690.7 1414.1 706.0C1419.3 721.3 1424.6 736.7 1430.0 752.0C1435.4 767.3 1443.8 790.3 1446.6 798.0L1885.0 798.0C1881.2 790.3 1869.7 767.3 1862.0 752.0C1854.3 736.7 1846.7 721.3 1839.0 706.0C1831.3 690.7 1823.7 675.3 1816.0 660.0C1808.3 644.7 1800.7 629.3 1793.0 614.0C1785.3 598.7 1777.7 583.3 1770.0 568.0C1762.3 552.7 1754.7 537.3 1747.0 522.0C1739.3 506.7 1731.7 491.3 1724.0 476.0C1716.3 460.7 1708.7 445.3 1701.0 430.0C1693.3 414.7 1685.7 399.3 1678.0 384.0C1670.3 368.7 1662.7 353.3 1655.0 338.0C1647.3 322.7 1639.7 307.3 1632.0 292.0C1624.3 276.7 1616.7 261.3 1609.0 246.0C1601.3 230.7 1593.7 215.3 1586.0 200.0C1578.3 184.7 1570.7 169.3 1563.0 154.0C1555.3 138.7 1547.7 123.3 1540.0 108.0C1532.3 92.7 1524.7 77.3 1517.0 62.0C1509.3 46.7 1501.7 31.3 1494.0 16.0C1486.3 0.7 1474.8 -22.3 1471.0 -30.0Z" fill="#972952" />
<path d="M1203.5 -30.0C1206.2 -22.3 1214.2 0.7 1219.6 16.0C1225.0 31.3 1230.5 46.7 1236.0 62.0C1241.5 77.3 1247.0 92.7 1252.5 108.0C1258.1 123.3 1263.6 138.7 1269.1 154.0C1274.6 169.3 1280.1 184.7 1285.6 200.0C1291.1 215.3 1296.5 230.7 1301.9 246.0C1307.3 261.3 1312.7 276.7 1318.0 292.0C1323.3 307.3 1328.6 322.7 1333.8 338.0C1339.0 353.3 1344.2 368.7 1349.3 384.0C1354.5 399.3 1359.6 414.7 1364.6 430.0C1369.7 445.3 1374.7 460.7 1379.7 476.0C1384.7 491.3 1389.7 506.7 1394.6 522.0C1399.6 537.3 1404.6 552.7 1409.6 568.0C1414.6 583.3 1419.5 598.7 1424.6 614.0C1429.6 629.3 1434.7 644.7 1439.8 660.0C1445.0 675.3 1450.2 690.7 1455.5 706.0C1460.8 721.3 1466.2 736.7 1471.8 752.0C1477.3 767.3 1486.1 790.3 1488.9 798.0L1885.0 798.0C1881.2 790.3 1869.7 767.3 1862.0 752.0C1854.3 736.7 1846.7 721.3 1839.0 706.0C1831.3 690.7 1823.7 675.3 1816.0 660.0C1808.3 644.7 1800.7 629.3 1793.0 614.0C1785.3 598.7 1777.7 583.3 1770.0 568.0C1762.3 552.7 1754.7 537.3 1747.0 522.0C1739.3 506.7 1731.7 491.3 1724.0 476.0C1716.3 460.7 1708.7 445.3 1701.0 430.0C1693.3 414.7 1685.7 399.3 1678.0 384.0C1670.3 368.7 1662.7 353.3 1655.0 338.0C1647.3 322.7 1639.7 307.3 1632.0 292.0C1624.3 276.7 1616.7 261.3 1609.0 246.0C1601.3 230.7 1593.7 215.3 1586.0 200.0C1578.3 184.7 1570.7 169.3 1563.0 154.0C1555.3 138.7 1547.7 123.3 1540.0 108.0C1532.3 92.7 1524.7 77.3 1517.0 62.0C1509.3 46.7 1501.7 31.3 1494.0 16.0C1486.3 0.7 1474.8 -22.3 1471.0 -30.0Z" fill="#84285c" />
<path d="M1236.7 -30.0C1239.7 -22.3 1248.3 0.7 1254.2 16.0C1260.1 31.3 1266.0 46.7 1271.9 62.0C1277.9 77.3 1283.8 92.7 1289.8 108.0C1295.8 123.3 1301.9 138.7 1307.9 154.0C1313.9 169.3 1320.0 184.7 1326.0 200.0C1332.1 215.3 1338.2 230.7 1344.3 246.0C1350.3 261.3 1356.4 276.7 1362.5 292.0C1368.6 307.3 1374.7 322.7 1380.8 338.0C1386.8 353.3 1392.9 368.7 1399.0 384.0C1405.1 399.3 1411.1 414.7 1417.2 430.0C1423.3 445.3 1429.3 460.7 1435.4 476.0C1441.4 491.3 1447.4 506.7 1453.5 522.0C1459.5 537.3 1465.5 552.7 1471.6 568.0C1477.6 583.3 1483.6 598.7 1489.6 614.0C1495.6 629.3 1501.6 644.7 1507.6 660.0C1513.6 675.3 1519.6 690.7 1525.7 706.0C1531.7 721.3 1537.7 736.7 1543.7 752.0C1549.7 767.3 1558.8 790.3 1561.8 798.0L1885.0 798.0C1881.2 790.3 1869.7 767.3 1862.0 752.0C1854.3 736.7 1846.7 721.3 1839.0 706.0C1831.3 690.7 1823.7 675.3 1816.0 660.0C1808.3 644.7 1800.7 629.3 1793.0 614.0C1785.3 598.7 1777.7 583.3 1770.0 568.0C1762.3 552.7 1754.7 537.3 1747.0 522.0C1739.3 506.7 1731.7 491.3 1724.0 476.0C1716.3 460.7 1708.7 445.3 1701.0 430.0C1693.3 414.7 1685.7 399.3 1678.0 384.0C1670.3 368.7 1662.7 353.3 1655.0 338.0C1647.3 322.7 1639.7 307.3 1632.0 292.0C1624.3 276.7 1616.7 261.3 1609.0 246.0C1601.3 230.7 1593.7 215.3 1586.0 200.0C1578.3 184.7 1570.7 169.3 1563.0 154.0C1555.3 138.7 1547.7 123.3 1540.0 108.0C1532.3 92.7 1524.7 77.3 1517.0 62.0C1509.3 46.7 1501.7 31.3 1494.0 16.0C1486.3 0.7 1474.8 -22.3 1471.0 -30.0Z" fill="#742a68" />
<path d="M1259.5 -30.0C1263.0 -22.3 1273.4 0.7 1280.4 16.0C1287.4 31.3 1294.4 46.7 1301.5 62.0C1308.5 77.3 1315.6 92.7 1322.7 108.0C1329.8 123.3 1337.0 138.7 1344.1 154.0C1351.2 169.3 1358.4 184.7 1365.6 200.0C1372.7 215.3 1379.9 230.7 1387.1 246.0C1394.3 261.3 1401.5 276.7 1408.7 292.0C1415.9 307.3 1423.1 322.7 1430.3 338.0C1437.5 353.3 1444.7 368.7 1451.9 384.0C1459.1 399.3 1466.3 414.7 1473.5 430.0C1480.7 445.3 1487.9 460.7 1495.1 476.0C1502.3 491.3 1509.4 506.7 1516.6 522.0C1523.8 537.3 1530.9 552.7 1538.0 568.0C1545.2 583.3 1552.3 598.7 1559.4 614.0C1566.5 629.3 1573.6 644.7 1580.6 660.0C1587.7 675.3 1594.7 690.7 1601.8 706.0C1608.8 721.3 1615.8 736.7 1622.8 752.0C1629.8 767.3 1640.2 790.3 1643.7 798.0L1885.0 798.0C1881.2 790.3 1869.7 767.3 1862.0 752.0C1854.3 736.7 1846.7 721.3 1839.0 706.0C1831.3 690.7 1823.7 675.3 1816.0 660.0C1808.3 644.7 1800.7 629.3 1793.0 614.0C1785.3 598.7 1777.7 583.3 1770.0 568.0C1762.3 552.7 1754.7 537.3 1747.0 522.0C1739.3 506.7 1731.7 491.3 1724.0 476.0C1716.3 460.7 1708.7 445.3 1701.0 430.0C1693.3 414.7 1685.7 399.3 1678.0 384.0C1670.3 368.7 1662.7 353.3 1655.0 338.0C1647.3 322.7 1639.7 307.3 1632.0 292.0C1624.3 276.7 1616.7 261.3 1609.0 246.0C1601.3 230.7 1593.7 215.3 1586.0 200.0C1578.3 184.7 1570.7 169.3 1563.0 154.0C1555.3 138.7 1547.7 123.3 1540.0 108.0C1532.3 92.7 1524.7 77.3 1517.0 62.0C1509.3 46.7 1501.7 31.3 1494.0 16.0C1486.3 0.7 1474.8 -22.3 1471.0 -30.0Z" fill="#5e2a72" />
<path d="M1305.0 -30.0C1308.8 -22.3 1320.3 0.7 1328.0 16.0C1335.7 31.3 1343.3 46.7 1351.0 62.0C1358.7 77.3 1366.3 92.7 1374.0 108.0C1381.7 123.3 1389.3 138.7 1397.0 154.0C1404.7 169.3 1412.3 184.7 1420.0 200.0C1427.7 215.3 1435.3 230.7 1443.0 246.0C1450.7 261.3 1458.3 276.7 1466.0 292.0C1473.7 307.3 1481.3 322.7 1489.0 338.0C1496.7 353.3 1504.3 368.7 1512.0 384.0C1519.7 399.3 1527.3 414.7 1535.0 430.0C1542.7 445.3 1550.3 460.7 1558.0 476.0C1565.7 491.3 1573.3 506.7 1581.0 522.0C1588.7 537.3 1596.3 552.7 1604.0 568.0C1611.7 583.3 1619.3 598.7 1627.0 614.0C1634.7 629.3 1642.3 644.7 1650.0 660.0C1657.7 675.3 1665.3 690.7 1673.0 706.0C1680.7 721.3 1688.3 736.7 1696.0 752.0C1703.7 767.3 1715.2 790.3 1719.0 798.0L1885.0 798.0C1881.2 790.3 1869.7 767.3 1862.0 752.0C1854.3 736.7 1846.7 721.3 1839.0 706.0C1831.3 690.7 1823.7 675.3 1816.0 660.0C1808.3 644.7 1800.7 629.3 1793.0 614.0C1785.3 598.7 1777.7 583.3 1770.0 568.0C1762.3 552.7 1754.7 537.3 1747.0 522.0C1739.3 506.7 1731.7 491.3 1724.0 476.0C1716.3 460.7 1708.7 445.3 1701.0 430.0C1693.3 414.7 1685.7 399.3 1678.0 384.0C1670.3 368.7 1662.7 353.3 1655.0 338.0C1647.3 322.7 1639.7 307.3 1632.0 292.0C1624.3 276.7 1616.7 261.3 1609.0 246.0C1601.3 230.7 1593.7 215.3 1586.0 200.0C1578.3 184.7 1570.7 169.3 1563.0 154.0C1555.3 138.7 1547.7 123.3 1540.0 108.0C1532.3 92.7 1524.7 77.3 1517.0 62.0C1509.3 46.7 1501.7 31.3 1494.0 16.0C1486.3 0.7 1474.8 -22.3 1471.0 -30.0Z" fill="#38225c" /></svg></div>
<div id="topbar">
<svg width="1366" height="29" style="position:absolute;left:0;top:0" viewBox="0 0 1366 29">
<g fill="#fff">
<rect x="13" y="5" width="18" height="5.3" rx="1"/><rect x="13" y="12" width="10.8" height="11" rx="1"/><rect x="25.6" y="12" width="5.4" height="11" rx="1"/>
</g>
<g fill="#fff">
<rect x="1285.6" y="7" width="5.8" height="4" rx="0.8"/><rect x="1287.7" y="10.5" width="1.7" height="3.5"/><rect x="1281" y="13.6" width="15.1" height="1.9"/>
<rect x="1283.2" y="15" width="1.7" height="3"/><rect x="1292.3" y="15" width="1.7" height="3"/>
<rect x="1281" y="17.5" width="5.8" height="4.6" rx="0.8"/><rect x="1290.3" y="17.5" width="5.8" height="4.6" rx="0.8"/>
<path d="M1308 12.6Q1308 12.2 1308.4 12.2H1310.9L1314.6 8.2Q1315 7.9 1315 8.4V20.8Q1315 21.3 1314.6 20.9L1310.9 16.8H1308.4Q1308 16.8 1308 16.4Z"/>
</g>
<path d="M1316.9 11.2Q1319.9 14.5 1316.9 17.8" fill="none" stroke="#fff" stroke-width="1.8"/>
<path d="M1320.4 9.2Q1324.4 14.5 1320.4 19.8" fill="none" stroke="#5e5e5e" stroke-width="1.8"/>
<rect x="1337.9" y="10.2" width="9.3" height="10.9" rx="2.2" fill="none" stroke="#fff" stroke-width="2"/>
<rect x="1341" y="7" width="3.3" height="2.6" rx="0.6" fill="#fff"/>
<rect x="1339.7" y="12" width="5.7" height="7.3" fill="#fff"/>
<path d="M1348.4 14.2L1343.2 19H1346.2L1345 23L1350.6 17.4H1347.4Z" fill="#fff" stroke="#000" stroke-width="1.5" stroke-linejoin="round" paint-order="stroke"/>
</svg>
<div id="clock">11月25日 12<i>:</i>12</div>
</div>
<div id="alma">
<svg width="40" height="40" viewBox="-20 -20 40 40" style="position:absolute;left:53.3px;top:673px"><g transform="rotate(0)" fill="#ff4649"><circle cx="-7.55" cy="-11.9" r="2.35"/><path d="M-10.5 -8.3C-11.3 -3.8 -7.2 -1.2 -0.9 -0.3C-4.6 -2.5 -6.9 -5 -5.9 -7.6L-2.5 -9.2A1.35 1.35 0 1 0 -3.7 -11.7L-7.3 -9.5Q-9.8 -10.2 -10.5 -8.3Z"/></g><g transform="rotate(72)" fill="#ffcb12"><circle cx="-7.55" cy="-11.9" r="2.35"/><path d="M-10.5 -8.3C-11.3 -3.8 -7.2 -1.2 -0.9 -0.3C-4.6 -2.5 -6.9 -5 -5.9 -7.6L-2.5 -9.2A1.35 1.35 0 1 0 -3.7 -11.7L-7.3 -9.5Q-9.8 -10.2 -10.5 -8.3Z"/></g><g transform="rotate(144)" fill="#86da2f"><circle cx="-7.55" cy="-11.9" r="2.35"/><path d="M-10.5 -8.3C-11.3 -3.8 -7.2 -1.2 -0.9 -0.3C-4.6 -2.5 -6.9 -5 -5.9 -7.6L-2.5 -9.2A1.35 1.35 0 1 0 -3.7 -11.7L-7.3 -9.5Q-9.8 -10.2 -10.5 -8.3Z"/></g><g transform="rotate(216)" fill="#24c2ff"><circle cx="-7.55" cy="-11.9" r="2.35"/><path d="M-10.5 -8.3C-11.3 -3.8 -7.2 -1.2 -0.9 -0.3C-4.6 -2.5 -6.9 -5 -5.9 -7.6L-2.5 -9.2A1.35 1.35 0 1 0 -3.7 -11.7L-7.3 -9.5Q-9.8 -10.2 -10.5 -8.3Z"/></g><g transform="rotate(288)" fill="#0069da"><circle cx="-7.55" cy="-11.9" r="2.35"/><path d="M-10.5 -8.3C-11.3 -3.8 -7.2 -1.2 -0.9 -0.3C-4.6 -2.5 -6.9 -5 -5.9 -7.6L-2.5 -9.2A1.35 1.35 0 1 0 -3.7 -11.7L-7.3 -9.5Q-9.8 -10.2 -10.5 -8.3Z"/></g></svg>
<div id="almatxt">AlmaLinux</div>
</div>
<div id="win">
<div id="hdr">
<svg width="540" height="46" viewBox="0 0 540 46" style="position:absolute;left:0;top:0">
<g fill="none" stroke="#2e3436" stroke-width="1.5">
<circle cx="16.5" cy="20.5" r="2.2"/><path d="M19 20.5H24.5"/>
<circle cx="21" cy="25.5" r="2.2"/><path d="M13 25.5H18.5"/>
</g>
<path d="M277.5 36.5H345.5L343 39.5H280Z" fill="#3584e4"/>
</svg>
<span class="t l pb" style="left:32px">/</span><span class="t l pb" style="left:44px">org</span>
<span class="t l pb" style="left:70px">/</span><span class="t l pb" style="left:82px">gnome</span>
<span class="t l pb" style="left:122px">/</span><span class="t l pb" style="left:134px">desktop</span>
<span class="t l pb" style="left:189px">/</span><span class="t l pb" style="left:200.5px">interface</span>
<span class="t l pb" style="left:268px">/</span><span class="t l pb" style="left:280px">font-name</span>
<div class="btn" style="left:368px"><svg width="32" height="30" viewBox="0 0 32 30"><circle cx="14.3" cy="13.4" r="5.6" fill="none" stroke="#2e3436" stroke-width="2"/><path d="M18.4 17.5L22.6 21.4" stroke="#2e3436" stroke-width="2.3" stroke-linecap="round"/></svg></div>
<div class="btn" style="left:410px"><svg width="32" height="30" viewBox="0 0 32 30"><path d="M16.10 7.80L18.16 12.57L23.33 13.05L19.43 16.48L20.57 21.55L16.10 18.90L11.63 21.55L12.77 16.48L8.87 13.05L14.04 12.57Z" fill="none" stroke="#a8a9a7" stroke-width="1.8" stroke-linejoin="miter"/></svg></div>
<div class="btn" style="left:452px"><svg width="32" height="30" viewBox="0 0 32 30"><path d="M9 9.5H23M9 14.9H23M9 20.4H23" stroke="#2e3436" stroke-width="2"/></svg></div>
<svg width="16" height="16" viewBox="0 0 16 16" style="position:absolute;left:509px;top:15px"><path d="M4.6 4.6l7 7M11.6 4.6l-7 7" stroke="#2e3436" stroke-width="2.2"/></svg>
</div>
<div class="t lab" style="top:61px">定義</div><div class="t val l" style="top:61px">Schema with path</div>
<div class="t lab" style="top:97px">スキーマ</div><div class="t val l" style="top:97px">org.gnome.desktop.interface</div>
<div class="sep" style="top:128px"></div>
<div class="t lab" style="top:144px">概要</div><div class="t val" style="top:144px">デフォルトのフォント</div>
<div class="t lab" style="top:180px">説明</div><div class="t val" style="top:180px"><span class="l">gtk+&nbsp;</span>が使用するデフォルトのフォント名です。</div>
<div class="t lab" style="top:216px">型名</div><div class="t val" style="top:216px">文字列</div>
<div class="t lab" style="top:252px">デフォルト</div><div class="t val l" style="top:252px">'Red Hat Text Regular 11'</div>
<div class="t lab" style="top:288px">現在値</div><div class="t val l" style="top:288px">'MigMix 1M 10'</div>
<div class="sep" style="top:319px"></div>
<div class="t lab" style="top:335.2px">デフォルト値を使用する</div>
<div id="sw"><div id="knob"></div></div>
<div class="t lab" style="top:377.2px">カスタム値</div>
<div id="entry"><span class="t l" style="left:7.6px;top:7.8px">MigMix 1M 10</span></div>
</div>
</body>
</html>
